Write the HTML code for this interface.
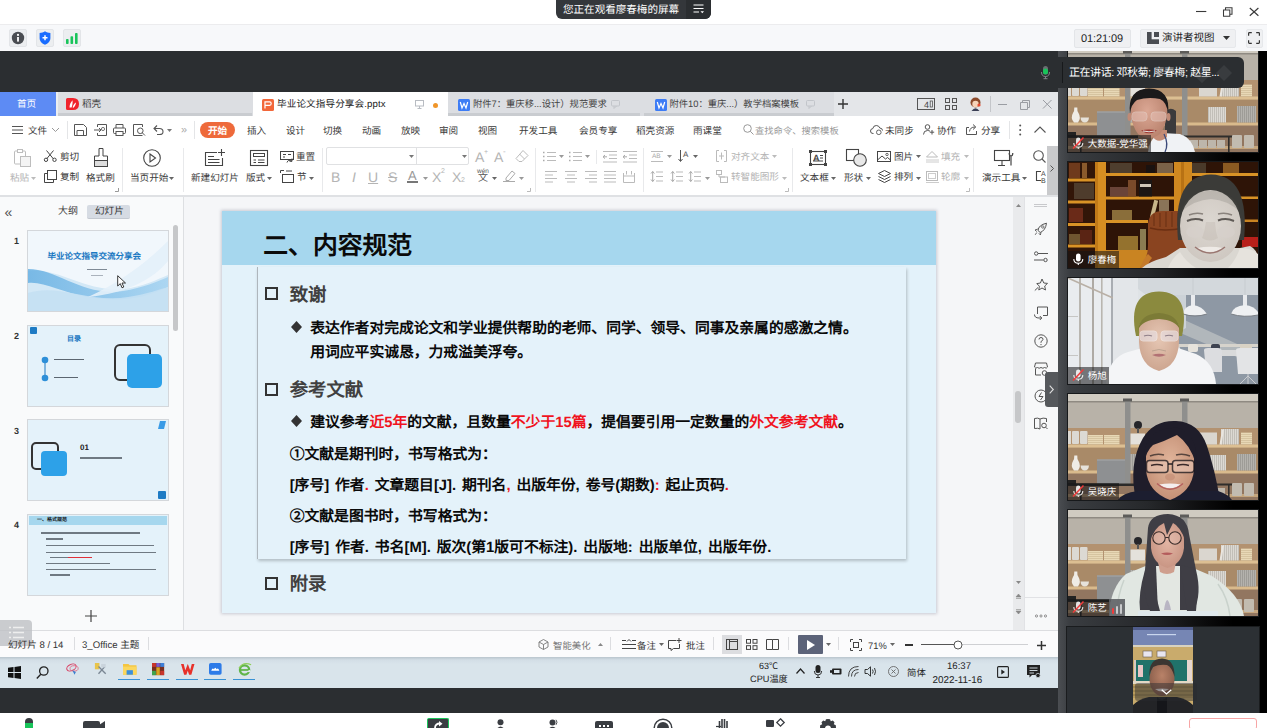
<!DOCTYPE html>
<html lang="zh-CN">
<head>
<meta charset="utf-8">
<title>meeting</title>
<style>
*{box-sizing:border-box;margin:0;padding:0}
html,body{width:1267px;height:728px;overflow:hidden;background:#fff;font-family:"Liberation Sans",sans-serif;}
.a{position:absolute}
#root{position:relative;width:1267px;height:728px;overflow:hidden;background:#fff}
.t{position:absolute;white-space:nowrap;line-height:1;display:block;text-rendering:geometricPrecision}
svg{position:absolute;overflow:visible}
.ib{position:absolute;top:29px;width:18px;height:18px;background:#eceef0;border:1px solid #e3e5e8;border-radius:2px}
.sep{position:absolute;width:1px;background:#e4e5e7}
.b{font-weight:bold}
.r{color:#f0141e}
</style>
</head>
<body>
<div id="root">
<div class="a" style="left:0px;top:0px;width:1267px;height:25px;background:#fff;"></div><div class="a" style="left:556px;top:0px;width:155px;height:19px;background:#34373b;border-radius:0 0 6px 6px"></div><div class="a" style="left:686px;top:0px;width:25px;height:19px;background:#2b2e31;border-radius:0 0 6px 0"></div><span class="t" style="left:563px;top:4.8px;font-size:10.55px;color:#fff;">您正在观看廖春梅的屏幕</span><svg style="left:693px;top:4px;" width="11" height="10" viewBox="0 0 11 10"><path d="M0.5 1H10.5M0.5 4.5H10.5M0.5 8H6" stroke="#fff" stroke-width="1.2" fill="none"/><path d="M7.5 7.2H11L9.25 9.3Z" fill="#fff"/></svg><svg style="left:1196px;top:5px;" width="66" height="14" viewBox="0 0 66 14"><path d="M0 6.500H10.300" stroke="#3a3a3a" stroke-width="1.1"/><path d="M27.500 5H33.800V11.200H27.500Z M29.500 5V2.800H36V9.200H33.800" stroke="#3a3a3a" stroke-width="1.05" fill="none"/><path d="M53.800 3L62.400 10.800M62.400 3L53.800 10.800" stroke="#3a3a3a" stroke-width="1.15"/></svg><div class="a" style="left:0px;top:24px;width:1267px;height:27px;background:#f7f8fa;border-top:1px solid #ececee"></div><div class="ib" style="left:9px"></div><div class="ib" style="left:36px"></div><div class="ib" style="left:63px"></div><svg style="left:11px;top:31px;" width="14" height="14" viewBox="0 0 14 14"><circle cx="7" cy="7" r="6.2" fill="#4a4d52"/><rect x="6.1" y="6" width="1.8" height="4.6" fill="#fff"/><circle cx="7" cy="3.9" r="1.1" fill="#fff"/></svg><svg style="left:39px;top:31px;" width="12" height="14" viewBox="0 0 12 14"><path d="M6 0.3C4.5 1.5 2.5 2 0.6 2V7C0.6 10.5 3 12.6 6 13.7C9 12.6 11.4 10.5 11.4 7V2C9.5 2 7.5 1.5 6 0.3Z" fill="#1a6dff"/><path d="M6 4.3V9.3M3.5 6.8H8.5" stroke="#fff" stroke-width="1.5"/></svg><svg style="left:66px;top:33px;" width="12" height="11" viewBox="0 0 12 11"><rect x="0" y="6" width="2.6" height="5" rx="0.8" fill="#19c45a"/><rect x="4.5" y="3.2" width="2.6" height="7.8" rx="0.8" fill="#19c45a"/><rect x="9" y="0" width="2.6" height="11" rx="0.8" fill="#19c45a"/></svg><div class="a" style="left:1074px;top:29px;width:57px;height:18.5px;background:#eff0f2;border-radius:2px;border:1px solid #e3e5e8"></div><span class="t" style="left:1081px;top:33.8px;font-size:11px;color:#222;letter-spacing:-0.1px">01:21:09</span><div class="a" style="left:1140px;top:29px;width:96px;height:18.5px;background:#eff0f2;border-radius:2px;border:1px solid #e6e8eb"></div><svg style="left:1147px;top:32px;" width="12" height="12" viewBox="0 0 12 12"><rect x="0" y="0" width="4.600" height="12" fill="#4a4d52"/><rect x="0" y="7.300" width="12" height="4.700" fill="#4a4d52"/><rect x="7" y="0" width="5" height="5" fill="#4a4d52"/></svg><span class="t" style="left:1162px;top:33.3px;font-size:10.5px;color:#222;">演讲者视图</span><svg style="left:1223px;top:36.2px;" width="7" height="4" viewBox="0 0 7 4"><path d="M0 0H7L3.500 4Z" fill="#333"/></svg><div class="a" style="left:1245.5px;top:29px;width:17px;height:18.5px;background:#eff0f2;border-radius:2px;border:1px solid #e6e8eb"></div><svg style="left:1248px;top:32px;" width="12" height="12" viewBox="0 0 12 12"><path d="M0.600 3.800V1.400Q0.600 0.600 1.400 0.600H3.800M8.200 0.600H10.600Q11.400 0.600 11.400 1.400V3.800M11.400 8.200V10.600Q11.400 11.400 10.600 11.400H8.200M3.800 11.400H1.400Q0.600 11.400 0.600 10.600V8.200" stroke="#333" stroke-width="1.2" fill="none"/></svg><div class="a" style="left:0px;top:51px;width:1060px;height:662px;background:#2b2e31;"></div><div class="a" style="left:1058px;top:51px;width:209px;height:662px;background:#000;"></div><div class="a" style="left:1058px;top:51px;width:10px;height:662px;background:linear-gradient(90deg,#3c4044,#2a2d30);"></div><div class="a" style="left:0px;top:92px;width:1058px;height:596px;background:#f1f2f4;"></div><div class="a" style="left:0px;top:92px;width:1058px;height:24px;background:#dcdee2;"></div><div class="a" style="left:834px;top:92px;width:224px;height:24px;background:#e4e6e9;"></div><div class="a" style="left:0px;top:92px;width:56px;height:24px;background:#5d8bf4;"></div><span class="t" style="left:17px;top:100px;font-size:9.6px;color:#fff;">首页</span><div class="a" style="left:56px;top:92px;width:2px;height:24px;background:#eceef0;"></div><svg style="left:66px;top:98px;" width="13" height="12" viewBox="0 0 13 12"><path d="M1.500 0H7Q13 0 13 6Q13 12 7 12H1.500Q0 12 0 10.500V1.500Q0 0 1.500 0Z" fill="#f0232c"/><path d="M3.5 9.5C3.5 6 5 4 6.5 2.2C6.8 4.5 6.5 7 5.6 9.5Z M6.6 9.6C7.2 7.2 8.3 5.6 10 4.6C9.8 6.8 8.8 8.6 7.4 9.7Z" fill="#fff"/></svg><span class="t" style="left:82px;top:100px;font-size:9.6px;color:#444;">稻壳</span><div class="a" style="left:58px;top:113px;width:194px;height:3px;background:#c9ccd0;"></div><div class="a" style="left:253px;top:92px;width:195px;height:24px;background:#fff;"></div><svg style="left:262px;top:98.5px;" width="12" height="12" viewBox="0 0 12 12"><rect width="12" height="12" rx="1.5" fill="#f2673a"/><path d="M3 9.5V2.8H7.6Q9.2 2.8 9.2 4.6Q9.2 6.4 7.6 6.4H3" stroke="#fff" stroke-width="1.2" fill="none"/></svg><span class="t" style="left:277px;top:100px;font-size:9.6px;color:#222;letter-spacing:0.1px">毕业论文指导分享会.pptx</span><svg style="left:415px;top:100px;" width="9" height="9" viewBox="0 0 9 9"><rect x="0.5" y="0.5" width="8" height="5.5" fill="none" stroke="#b8bcc2" stroke-width="1"/><path d="M4.5 6V8.5M2.5 8.5H6.5" stroke="#b8bcc2" stroke-width="1"/></svg><svg style="left:433px;top:102.5px;" width="5" height="5" viewBox="0 0 5 5"><circle cx="2.5" cy="2.5" r="2.5" fill="#f0962a"/></svg><svg style="left:458px;top:98.5px;" width="12" height="12" viewBox="0 0 12 12"><rect width="12" height="12" rx="1.5" fill="#3d7cf5"/><path d="M2.3 3L4 9L6 4.5L8 9L9.7 3" stroke="#fff" stroke-width="1.2" fill="none"/></svg><span class="t" style="left:473px;top:100px;font-size:9.3px;color:#444;">附件7：重庆移...设计）规范要求</span><svg style="left:611px;top:100px;" width="9" height="9" viewBox="0 0 9 9"><rect x="0.5" y="0.5" width="8" height="5.5" rx="1" fill="none" stroke="#c2c5ca" stroke-width="1"/><path d="M3 6L3 8.5L5.5 6" stroke="#c2c5ca" stroke-width="1" fill="none"/></svg><div class="a" style="left:448px;top:113px;width:192px;height:3px;background:#c9ccd0;"></div><svg style="left:655px;top:98.5px;" width="12" height="12" viewBox="0 0 12 12"><rect width="12" height="12" rx="1.5" fill="#3d7cf5"/><path d="M2.3 3L4 9L6 4.5L8 9L9.7 3" stroke="#fff" stroke-width="1.2" fill="none"/></svg><span class="t" style="left:669.5px;top:100px;font-size:9.3px;color:#444;">附件10：重庆...）教学档案模板</span><svg style="left:806px;top:100px;" width="9" height="9" viewBox="0 0 9 9"><rect x="0.5" y="0.5" width="8" height="5.5" rx="1" fill="none" stroke="#c2c5ca" stroke-width="1"/><path d="M3 6L3 8.5L5.5 6" stroke="#c2c5ca" stroke-width="1" fill="none"/></svg><div class="a" style="left:644px;top:113px;width:190px;height:3px;background:#c9ccd0;"></div><svg style="left:838px;top:99px;" width="10" height="10" viewBox="0 0 10 10"><path d="M5 0V10M0 5H10" stroke="#333" stroke-width="1.4"/></svg><svg style="left:917px;top:98px;" width="18" height="12" viewBox="0 0 18 12"><rect x="0.5" y="0.5" width="17" height="11" fill="none" stroke="#555" stroke-width="1"/><rect x="13.2" y="3" width="2.2" height="6" fill="none" stroke="#555" stroke-width="0.8"/></svg><span class="t" style="left:924px;top:100.5px;font-size:9px;color:#444;">4</span><svg style="left:945px;top:98px;" width="12" height="12" viewBox="0 0 12 12"><rect x="0.5" y="0.5" width="4" height="4" fill="none" stroke="#555"/><rect x="7.5" y="0.5" width="4" height="4" fill="none" stroke="#555"/><rect x="0.5" y="7.5" width="4" height="4" fill="none" stroke="#555"/><rect x="7.5" y="7.5" width="4" height="4" fill="none" stroke="#555"/></svg><svg style="left:969px;top:97px;" width="13" height="14" viewBox="0 0 13 14"><circle cx="6.5" cy="5.5" r="5" fill="#8b4a2b"/><circle cx="6.5" cy="7" r="3.2" fill="#f6d3b8"/><path d="M2.5 14Q6.5 8.5 10.5 14Z" fill="#3a3f55"/><circle cx="10" cy="8" r="1.6" fill="#e8482e"/></svg><div class="a" style="left:990px;top:96px;width:1px;height:16px;background:#c4c6ca;"></div><svg style="left:998px;top:98px;" width="56" height="12" viewBox="0 0 56 12"><path d="M0 6.5H9" stroke="#9a9da3" stroke-width="1"/><path d="M22.5 4.5H29.5V11.5H22.5Z M24.5 4.5V2.5H31.5V9.5H29.5" stroke="#9a9da3" stroke-width="1" fill="none"/><path d="M45 2L53.5 10.5M53.5 2L45 10.5" stroke="#9a9da3" stroke-width="1"/></svg><div class="a" style="left:0px;top:116px;width:1058px;height:27px;background:#fff;"></div><svg style="left:12px;top:126px;" width="11" height="8" viewBox="0 0 11 8"><path d="M0 0.5H11M0 4H11M0 7.5H11" stroke="#555" stroke-width="1"/></svg><span class="t" style="left:28px;top:126.8px;font-size:9.6px;color:#3b3b3b;">文件</span><svg style="left:52px;top:128px;" width="7" height="4" viewBox="0 0 7 4"><path d="M0 0L3.5 3.5L7 0" stroke="#999" fill="none"/></svg><div class="a" style="left:67px;top:121px;width:1px;height:18px;background:#e4e5e7;"></div><svg style="left:74px;top:124px;" width="13" height="12" viewBox="0 0 13 12"><path d="M0.5 0.5H9.5L12.5 3.5V11.5H0.5Z" fill="none" stroke="#555"/><path d="M3 11.5V6.5H9.5V11.5" fill="none" stroke="#555"/></svg><svg style="left:94px;top:124px;" width="13" height="12" viewBox="0 0 13 12"><path d="M3.5 3V0.5H12.5V11.5H3.5V9" fill="none" stroke="#555"/><path d="M0 6H7M5 4L7 6L5 8" fill="none" stroke="#555"/><circle cx="9" cy="5" r="1.6" fill="none" stroke="#555" stroke-width="0.8"/></svg><svg style="left:113px;top:124px;" width="13" height="12" viewBox="0 0 13 12"><path d="M3 4V0.5H10V4" fill="none" stroke="#555"/><rect x="0.5" y="4" width="12" height="5.5" rx="1" fill="none" stroke="#555"/><rect x="3" y="7.5" width="7" height="4" fill="#fff" stroke="#555"/></svg><svg style="left:133px;top:124px;" width="13" height="12" viewBox="0 0 13 12"><path d="M9.5 11.5H0.5V0.5H9.5V3" fill="none" stroke="#555"/><circle cx="7.3" cy="6.8" r="2.8" fill="none" stroke="#555"/><path d="M9.3 8.8L12 11.5" stroke="#555"/></svg><svg style="left:153px;top:124px;" width="11" height="11" viewBox="0 0 11 11"><path d="M1 4.5H6.5Q10 4.5 10 7.7Q10 10.5 6.5 10.5H4" fill="none" stroke="#555" stroke-width="1.1"/><path d="M4 1.5L1 4.5L4 7.5" fill="none" stroke="#555" stroke-width="1.1"/></svg><svg style="left:167px;top:129px;" width="5" height="3" viewBox="0 0 5 3"><path d="M0 0H5L2.5 3Z" fill="#777"/></svg><span class="t" style="left:181px;top:125px;font-size:11px;color:#aaa;">»</span><div class="a" style="left:194px;top:121px;width:1px;height:18px;background:#e4e5e7;"></div><div class="a" style="left:200px;top:122px;width:35px;height:16px;background:#ee6a3b;border-radius:8px"></div><span class="t" style="left:208px;top:126.6px;font-size:9.6px;color:#fff;font-weight:bold;">开始</span><span class="t" style="left:247px;top:126.8px;font-size:9.6px;color:#3b3b3b;">插入</span><span class="t" style="left:286px;top:126.8px;font-size:9.6px;color:#3b3b3b;">设计</span><span class="t" style="left:323px;top:126.8px;font-size:9.6px;color:#3b3b3b;">切换</span><span class="t" style="left:362px;top:126.8px;font-size:9.6px;color:#3b3b3b;">动画</span><span class="t" style="left:401px;top:126.8px;font-size:9.6px;color:#3b3b3b;">放映</span><span class="t" style="left:439px;top:126.8px;font-size:9.6px;color:#3b3b3b;">审阅</span><span class="t" style="left:478px;top:126.8px;font-size:9.6px;color:#3b3b3b;">视图</span><span class="t" style="left:519px;top:126.8px;font-size:9.6px;color:#3b3b3b;">开发工具</span><span class="t" style="left:579px;top:126.8px;font-size:9.6px;color:#3b3b3b;">会员专享</span><span class="t" style="left:636px;top:126.8px;font-size:9.6px;color:#3b3b3b;">稻壳资源</span><span class="t" style="left:693px;top:126.8px;font-size:9.6px;color:#3b3b3b;">雨课堂</span><svg style="left:743px;top:124px;" width="11" height="11" viewBox="0 0 11 11"><circle cx="4.5" cy="4.5" r="3.8" fill="none" stroke="#999"/><path d="M7.3 7.3L10.5 10.5" stroke="#999"/></svg><span class="t" style="left:755px;top:126.8px;font-size:9.299999999999999px;color:#999;">查找命令、搜索模板</span><svg style="left:870px;top:124px;" width="13" height="11" viewBox="0 0 13 11"><path d="M3.5 9.5H3Q0.5 9.5 0.5 7Q0.5 4.8 2.8 4.6Q3.3 1.5 6.3 1.5Q9 1.5 9.8 4Q12.5 4.2 12.5 6.5" fill="none" stroke="#555"/><circle cx="8.8" cy="8.3" r="2.3" fill="none" stroke="#555" stroke-width="0.9"/></svg><span class="t" style="left:885px;top:126.8px;font-size:9.6px;color:#3b3b3b;">未同步</span><svg style="left:923px;top:124px;" width="11" height="11" viewBox="0 0 11 11"><circle cx="4.5" cy="3" r="2.3" fill="none" stroke="#555"/><path d="M0.5 10.5Q0.5 6.5 4.5 6.5Q6 6.5 7 7.2" fill="none" stroke="#555"/><path d="M9 6V10.5M6.8 8.2H11.2" stroke="#555"/></svg><span class="t" style="left:937px;top:126.8px;font-size:9.6px;color:#3b3b3b;">协作</span><svg style="left:966px;top:124px;" width="12" height="11" viewBox="0 0 12 11"><path d="M3 3.5H0.5V10.5H10.5V7" fill="none" stroke="#555"/><path d="M3.5 7.5Q4 3 9 3M7 0.5L9.8 3L7 5.5" fill="none" stroke="#555"/></svg><span class="t" style="left:981px;top:126.8px;font-size:9.6px;color:#3b3b3b;">分享</span><div class="a" style="left:1009px;top:121px;width:1px;height:18px;background:#e4e5e7;"></div><svg style="left:1019px;top:124px;" width="3" height="12" viewBox="0 0 3 12"><circle cx="1.2" cy="1.5" r="1" fill="#555"/><circle cx="1.2" cy="6" r="1" fill="#555"/><circle cx="1.2" cy="10.5" r="1" fill="#555"/></svg><svg style="left:1034px;top:126px;" width="12" height="7" viewBox="0 0 12 7"><path d="M0.5 6.5L6 1L11.5 6.5" fill="none" stroke="#555" stroke-width="1.1"/></svg><div class="a" style="left:0px;top:143px;width:1058px;height:52px;background:#fff;"></div><div class="a" style="left:0px;top:194.5px;width:1058px;height:2px;background:#dfe1e4;"></div><svg style="left:14px;top:149px;" width="17" height="18" viewBox="0 0 17 18"><rect x="0.5" y="2" width="11" height="13" rx="1" fill="none" stroke="#bdbdbd"/><rect x="3.5" y="0.5" width="5" height="3" fill="#fff" stroke="#bdbdbd"/><rect x="6.5" y="7.5" width="10" height="10" fill="#f4f4f4" stroke="#bdbdbd"/></svg><span class="t" style="left:10px;top:174px;font-size:9.6px;color:#b4b4b4;">粘贴</span><svg style="left:31px;top:177px;" width="5" height="3" viewBox="0 0 5 3"><path d="M0 0H5L2.5 3Z" fill="#bbb"/></svg><svg style="left:44px;top:150px;" width="14" height="12" viewBox="0 0 14 12"><path d="M2.5 0.5L9.5 9M9.5 0.5L2.5 9" stroke="#444" stroke-width="1" fill="none"/><circle cx="2" cy="9.8" r="1.7" fill="none" stroke="#444"/><circle cx="10.5" cy="9.8" r="1.7" fill="none" stroke="#444"/></svg><span class="t" style="left:60px;top:153px;font-size:9.6px;color:#3b3b3b;">剪切</span><svg style="left:44px;top:170px;" width="13" height="13" viewBox="0 0 13 13"><rect x="3.5" y="0.5" width="9" height="9" fill="none" stroke="#444"/><path d="M3.5 3.5H0.5V12.5H9.5V9.5" fill="none" stroke="#444"/></svg><span class="t" style="left:60px;top:173px;font-size:9.6px;color:#3b3b3b;">复制</span><svg style="left:93px;top:148px;" width="16" height="19" viewBox="0 0 16 19"><path d="M6 0.5H10V8H14.5V18.5H1.5V8H6Z" fill="none" stroke="#444"/><rect x="1.5" y="12.5" width="13" height="6" fill="#ddd" stroke="#444"/></svg><span class="t" style="left:86px;top:174px;font-size:9.6px;color:#3b3b3b;">格式刷</span><svg style="left:115px;top:188px;" width="4" height="4" viewBox="0 0 4 4"><path d="M3.5 0V3.5H0" stroke="#999" fill="none"/></svg><div class="a" style="left:122px;top:148px;width:1px;height:44px;background:#e8e9eb;"></div><svg style="left:143px;top:149px;" width="18" height="18" viewBox="0 0 18 18"><circle cx="9" cy="9" r="8.3" fill="none" stroke="#444" stroke-width="1.1"/><path d="M7 5L12.5 9L7 13Z" fill="none" stroke="#444" stroke-width="1.1"/></svg><span class="t" style="left:130px;top:174px;font-size:9.6px;color:#3b3b3b;">当页开始</span><svg style="left:169px;top:177px;" width="5" height="3" viewBox="0 0 5 3"><path d="M0 0H5L2.5 3Z" fill="#666"/></svg><div class="a" style="left:183px;top:148px;width:1px;height:44px;background:#e8e9eb;"></div><svg style="left:205px;top:149px;" width="20" height="18" viewBox="0 0 20 18"><path d="M12 3.5H0.5V16.5H17.5V9" fill="none" stroke="#444" stroke-width="1.1"/><path d="M3 7.5H9M3 10.5H14.5M3 13.5H14.5" stroke="#444"/><path d="M16.5 0V7M13 3.5H20" stroke="#444" stroke-width="1.1"/></svg><span class="t" style="left:191px;top:174px;font-size:9.6px;color:#3b3b3b;">新建幻灯片</span><svg style="left:250px;top:150px;" width="18" height="16" viewBox="0 0 18 16"><rect x="0.5" y="0.5" width="17" height="15" fill="none" stroke="#444" stroke-width="1.1"/><rect x="3.5" y="3.5" width="11" height="3" fill="none" stroke="#444"/><path d="M3.5 10H6M8 10H14.5M3.5 12.5H6M8 12.5H14.5" stroke="#444"/></svg><span class="t" style="left:246px;top:174px;font-size:9.6px;color:#3b3b3b;">版式</span><svg style="left:267px;top:177px;" width="5" height="3" viewBox="0 0 5 3"><path d="M0 0H5L2.5 3Z" fill="#666"/></svg><svg style="left:280px;top:151px;" width="14" height="12" viewBox="0 0 14 12"><rect x="0.5" y="0.5" width="13" height="8" fill="none" stroke="#444"/><path d="M3 3.5H6M8 3.5H11M3 6H5" stroke="#444"/><path d="M7 11.5Q8 8 12 10M12 7.5V10.3H9.5" fill="none" stroke="#444"/></svg><span class="t" style="left:296px;top:153px;font-size:9.6px;color:#3b3b3b;">重置</span><svg style="left:280px;top:170px;" width="14" height="13" viewBox="0 0 14 13"><path d="M0.5 0.5H4M0.5 0.5V3" stroke="#444" fill="none"/><path d="M6 1H12" stroke="#444"/><rect x="2.5" y="4.5" width="11" height="8" fill="none" stroke="#444"/></svg><span class="t" style="left:297px;top:173px;font-size:9.6px;color:#3b3b3b;">节</span><svg style="left:309px;top:177px;" width="5" height="3" viewBox="0 0 5 3"><path d="M0 0H5L2.5 3Z" fill="#666"/></svg><div class="a" style="left:322px;top:148px;width:1px;height:44px;background:#e8e9eb;"></div><div class="a" style="left:326px;top:147px;width:143px;height:18px;background:#fff;border:1px solid #e0e1e3;border-radius:2px"></div><div class="a" style="left:416px;top:148px;width:1px;height:16px;background:#e0e1e3;"></div><svg style="left:409px;top:155px;" width="5" height="3" viewBox="0 0 5 3"><path d="M0 0H5L2.5 3Z" fill="#777"/></svg><svg style="left:462px;top:155px;" width="5" height="3" viewBox="0 0 5 3"><path d="M0 0H5L2.5 3Z" fill="#777"/></svg><span class="t" style="left:475px;top:150px;font-size:14px;color:#b4b4b4;">A</span><span class="t" style="left:484px;top:149px;font-size:7px;color:#b4b4b4;">+</span><span class="t" style="left:494px;top:150px;font-size:14px;color:#b4b4b4;">A</span><span class="t" style="left:503px;top:148px;font-size:8px;color:#b4b4b4;">-</span><svg style="left:515px;top:150px;" width="14" height="12" viewBox="0 0 14 12"><path d="M8 0.5L13 5.5L7 11.5H4L1 8.5Z M4.5 4L9.5 9" fill="none" stroke="#bbb"/></svg><span class="t" style="left:331px;top:170px;font-size:14px;color:#b4b4b4;">B</span><span class="t" style="left:352px;top:170px;font-size:14px;color:#b4b4b4;font-style:italic">I</span><span class="t" style="left:368px;top:170px;font-size:14px;color:#b4b4b4;text-decoration:underline">U</span><span class="t" style="left:388px;top:170px;font-size:14px;color:#b4b4b4;text-decoration:line-through">S</span><span class="t" style="left:408px;top:169px;font-size:13px;color:#999;">A</span><div class="a" style="left:407px;top:181px;width:11px;height:2px;background:#777;"></div><svg style="left:423px;top:177px;" width="5" height="3" viewBox="0 0 5 3"><path d="M0 0H5L2.5 3Z" fill="#999"/></svg><span class="t" style="left:432px;top:170px;font-size:14px;color:#b4b4b4;">X</span><span class="t" style="left:441px;top:168px;font-size:7px;color:#b4b4b4;">2</span><span class="t" style="left:452px;top:170px;font-size:14px;color:#b4b4b4;">X</span><span class="t" style="left:461px;top:177px;font-size:7px;color:#b4b4b4;">2</span><span class="t" style="left:477px;top:169px;font-size:6.5px;color:#555;">wén</span><span class="t" style="left:478px;top:174px;font-size:10px;color:#555;">文</span><svg style="left:492px;top:177px;" width="5" height="3" viewBox="0 0 5 3"><path d="M0 0H5L2.5 3Z" fill="#666"/></svg><svg style="left:503px;top:170px;" width="13" height="12" viewBox="0 0 13 12"><path d="M3 8L9 1L12 3.5L6 10.5H3Z" fill="none" stroke="#aaa"/><path d="M0 11.5H12" stroke="#aaa"/></svg><svg style="left:519px;top:177px;" width="5" height="3" viewBox="0 0 5 3"><path d="M0 0H5L2.5 3Z" fill="#999"/></svg><svg style="left:527px;top:188px;" width="4" height="4" viewBox="0 0 4 4"><path d="M3.5 0V3.5H0" stroke="#bbb" fill="none"/></svg><div class="a" style="left:535px;top:148px;width:1px;height:44px;background:#e8e9eb;"></div><svg style="left:543px;top:151px;" width="13" height="11" viewBox="0 0 13 11"><path d="M4 1.5H13M4 5.5H13M4 9.5H13" stroke="#bbb"/><path d="M0 1.5H1.5M0 5.5H1.5M0 9.5H1.5" stroke="#aaa" stroke-width="1.4"/></svg><svg style="left:559px;top:155px;" width="5" height="3" viewBox="0 0 5 3"><path d="M0 0H5L2.5 3Z" fill="#999"/></svg><svg style="left:569px;top:151px;" width="13" height="11" viewBox="0 0 13 11"><path d="M4 1.5H13M4 5.5H13M4 9.5H13" stroke="#bbb"/><path d="M0 1.5H1.5M0 5.5H1.5M0 9.5H1.5" stroke="#aaa" stroke-width="1.4"/></svg><svg style="left:585px;top:155px;" width="5" height="3" viewBox="0 0 5 3"><path d="M0 0H5L2.5 3Z" fill="#999"/></svg><div class="a" style="left:596px;top:150px;width:1px;height:14px;background:#e8e9eb;"></div><svg style="left:603px;top:151px;" width="14" height="11" viewBox="0 0 14 11"><path d="M0 0.5H14M6 4H14M6 7.5H14M0 11H14" stroke="#bbb"/><path d="M0 5.8H4M2 4L0 5.8L2 7.6" stroke="#aaa" fill="none"/></svg><svg style="left:623px;top:151px;" width="14" height="11" viewBox="0 0 14 11"><path d="M0 0.5H14M6 4H14M6 7.5H14M0 11H14" stroke="#bbb"/><path d="M0 5.8H4M2 4L0 5.8L2 7.6" stroke="#aaa" fill="none"/></svg><svg style="left:545px;top:171px;" width="12" height="11" viewBox="0 0 12 11"><path d="M0 0.5H12M0 4H8M0 7.5H12M0 11H8" stroke="#bbb"/></svg><svg style="left:565px;top:171px;" width="12" height="11" viewBox="0 0 12 11"><path d="M0 0.5H12M2 4H10M0 7.5H12M2 11H10" stroke="#bbb"/></svg><svg style="left:585px;top:171px;" width="12" height="11" viewBox="0 0 12 11"><path d="M0 0.5H12M4 4H12M0 7.5H12M4 11H12" stroke="#bbb"/></svg><svg style="left:604px;top:171px;" width="12" height="11" viewBox="0 0 12 11"><path d="M0 0.5H12M0 4H12M0 7.5H12M0 11H12" stroke="#bbb"/></svg><svg style="left:623px;top:171px;" width="12" height="12" viewBox="0 0 12 12"><path d="M0.5 2V11.5H11.5V2M0.5 5H11.5M3.5 0V3.5M8.5 0V3.5" stroke="#bbb" fill="none"/></svg><div class="a" style="left:643px;top:148px;width:1px;height:44px;background:#e8e9eb;"></div><svg style="left:651px;top:151px;" width="12" height="11" viewBox="0 0 12 11"><path d="M0 0.5H12M0 10.5H12" stroke="#bbb"/></svg><span class="t" style="left:652px;top:154px;font-size:6.5px;color:#aaa;">AB</span><svg style="left:667px;top:155px;" width="5" height="3" viewBox="0 0 5 3"><path d="M0 0H5L2.5 3Z" fill="#999"/></svg><svg style="left:678px;top:150px;" width="10" height="12" viewBox="0 0 10 12"><path d="M2.5 0V11M0.5 9L2.5 11.5L4.5 9" stroke="#555" fill="none"/></svg><span class="t" style="left:683px;top:151px;font-size:8px;color:#555;">A</span><svg style="left:693px;top:155px;" width="5" height="3" viewBox="0 0 5 3"><path d="M0 0H5L2.5 3Z" fill="#666"/></svg><svg style="left:716px;top:150px;" width="11" height="12" viewBox="0 0 11 12"><path d="M3 0.5H0.5V11.5H3M8 0.5H10.5V11.5H8M3 6H8M5.5 2.5V9.5" stroke="#bbb" fill="none"/></svg><span class="t" style="left:731px;top:153px;font-size:9.6px;color:#b4b4b4;">对齐文本</span><svg style="left:772px;top:155px;" width="5" height="3" viewBox="0 0 5 3"><path d="M0 0H5L2.5 3Z" fill="#bbb"/></svg><svg style="left:651px;top:171px;" width="12" height="11" viewBox="0 0 12 11"><path d="M5 1H12M5 5.5H12M5 10H12" stroke="#bbb"/><path d="M1.7 0.5V10.5M0 2.5L1.7 0.5L3.4 2.5M0 8.5L1.7 10.5L3.4 8.5" stroke="#aaa" fill="none"/></svg><svg style="left:671px;top:171px;" width="12" height="11" viewBox="0 0 12 11"><path d="M5 1H12M5 5.5H12M5 10H12" stroke="#bbb"/><path d="M1.7 0.5V10.5M0 2.5L1.7 0.5L3.4 2.5M0 8.5L1.7 10.5L3.4 8.5" stroke="#aaa" fill="none"/></svg><svg style="left:689px;top:171px;" width="12" height="11" viewBox="0 0 12 11"><path d="M5 1H12M5 5.5H12M5 10H12" stroke="#bbb"/><path d="M1.7 0.5V10.5M0 2.5L1.7 0.5L3.4 2.5M0 8.5L1.7 10.5L3.4 8.5" stroke="#aaa" fill="none"/></svg><svg style="left:705px;top:177px;" width="5" height="3" viewBox="0 0 5 3"><path d="M0 0H5L2.5 3Z" fill="#999"/></svg><svg style="left:716px;top:170px;" width="12" height="13" viewBox="0 0 12 13"><rect x="0.5" y="0.5" width="5" height="4" fill="none" stroke="#bbb"/><path d="M3 4.5V7H9" stroke="#bbb" fill="none"/><rect x="4.5" y="7" width="7" height="5.5" fill="none" stroke="#bbb"/></svg><span class="t" style="left:731px;top:173px;font-size:9.6px;color:#b4b4b4;">转智能图形</span><svg style="left:782px;top:177px;" width="5" height="3" viewBox="0 0 5 3"><path d="M0 0H5L2.5 3Z" fill="#bbb"/></svg><svg style="left:785px;top:188px;" width="4" height="4" viewBox="0 0 4 4"><path d="M3.5 0V3.5H0" stroke="#bbb" fill="none"/></svg><div class="a" style="left:792px;top:148px;width:1px;height:44px;background:#e8e9eb;"></div><svg style="left:809px;top:150px;" width="18" height="16" viewBox="0 0 18 16"><rect x="1.5" y="1.5" width="15" height="13" fill="none" stroke="#444" stroke-width="1.1"/><rect x="0" y="0" width="3" height="3" fill="#444"/><rect x="15" y="0" width="3" height="3" fill="#444"/><rect x="0" y="13" width="3" height="3" fill="#444"/><rect x="15" y="13" width="3" height="3" fill="#444"/><path d="M11 5.5H14M11 8H14M4 11H14" stroke="#444"/></svg><span class="t" style="left:813px;top:153.5px;font-size:9px;color:#444;font-weight:bold;">A</span><span class="t" style="left:800px;top:174px;font-size:9.6px;color:#3b3b3b;">文本框</span><svg style="left:831px;top:177px;" width="5" height="3" viewBox="0 0 5 3"><path d="M0 0H5L2.5 3Z" fill="#666"/></svg><svg style="left:846px;top:149px;" width="21" height="18" viewBox="0 0 21 18"><rect x="0.5" y="0.5" width="12" height="11" fill="none" stroke="#444" stroke-width="1.1"/><circle cx="14" cy="11" r="6.3" fill="#e8e8e8" stroke="#444" stroke-width="1.1"/></svg><span class="t" style="left:844px;top:174px;font-size:9.6px;color:#3b3b3b;">形状</span><svg style="left:866px;top:177px;" width="5" height="3" viewBox="0 0 5 3"><path d="M0 0H5L2.5 3Z" fill="#666"/></svg><svg style="left:877px;top:151px;" width="14" height="11" viewBox="0 0 14 11"><rect x="0.5" y="0.5" width="13" height="10" fill="none" stroke="#444"/><path d="M0.5 9L5 5L8.5 8L10.5 6.5L13.5 9" fill="none" stroke="#444"/><circle cx="10" cy="3.5" r="1.2" fill="none" stroke="#444" stroke-width="0.8"/></svg><span class="t" style="left:894px;top:153px;font-size:9.6px;color:#3b3b3b;">图片</span><svg style="left:916px;top:155px;" width="5" height="3" viewBox="0 0 5 3"><path d="M0 0H5L2.5 3Z" fill="#666"/></svg><svg style="left:878px;top:170px;" width="13" height="13" viewBox="0 0 13 13"><path d="M6.5 0.5L12.5 3.5L6.5 6.5L0.5 3.5Z M0.5 6.5L6.5 9.5L12.5 6.5M0.5 9.5L6.5 12.5L12.5 9.5" fill="none" stroke="#444"/></svg><span class="t" style="left:894px;top:173px;font-size:9.6px;color:#3b3b3b;">排列</span><svg style="left:916px;top:177px;" width="5" height="3" viewBox="0 0 5 3"><path d="M0 0H5L2.5 3Z" fill="#666"/></svg><svg style="left:926px;top:151px;" width="13" height="12" viewBox="0 0 13 12"><path d="M6 0.5L11.5 6H0.5Z" fill="none" stroke="#bbb"/><path d="M0 9H13M0 11H13" stroke="#ccc"/></svg><span class="t" style="left:941px;top:153px;font-size:9.6px;color:#b4b4b4;">填充</span><svg style="left:964px;top:155px;" width="5" height="3" viewBox="0 0 5 3"><path d="M0 0H5L2.5 3Z" fill="#bbb"/></svg><svg style="left:926px;top:171px;" width="13" height="12" viewBox="0 0 13 12"><rect x="0.5" y="0.5" width="11" height="9" fill="none" stroke="#bbb"/><rect x="2.5" y="2.5" width="7" height="5" fill="none" stroke="#ccc"/><path d="M0 11.5H13" stroke="#ccc"/></svg><span class="t" style="left:941px;top:173px;font-size:9.6px;color:#b4b4b4;">轮廓</span><svg style="left:964px;top:177px;" width="5" height="3" viewBox="0 0 5 3"><path d="M0 0H5L2.5 3Z" fill="#bbb"/></svg><svg style="left:966px;top:188px;" width="4" height="4" viewBox="0 0 4 4"><path d="M3.5 0V3.5H0" stroke="#bbb" fill="none"/></svg><div class="a" style="left:973px;top:148px;width:1px;height:44px;background:#e8e9eb;"></div><svg style="left:994px;top:150px;" width="20" height="17" viewBox="0 0 20 17"><rect x="0.5" y="0.5" width="15" height="10" fill="none" stroke="#444" stroke-width="1.1"/><path d="M8 10.5V15M4 15.5H11" stroke="#444" stroke-width="1.1"/><path d="M17 6V15.5M15.2 3Q15.2 6 17 6Q18.8 6 18.8 3" fill="none" stroke="#444" stroke-width="1.2"/></svg><span class="t" style="left:982px;top:174px;font-size:9.6px;color:#3b3b3b;">演示工具</span><svg style="left:1022px;top:177px;" width="5" height="3" viewBox="0 0 5 3"><path d="M0 0H5L2.5 3Z" fill="#666"/></svg><svg style="left:1033px;top:150px;" width="13" height="13" viewBox="0 0 13 13"><circle cx="5.5" cy="5.5" r="4.8" fill="none" stroke="#555" stroke-width="1.1"/><path d="M9 9L12.5 12.5" stroke="#555" stroke-width="1.1"/></svg><svg style="left:1036px;top:171px;" width="6" height="12" viewBox="0 0 6 12"><path d="M5 0.5H0.5V9.5H5" fill="none" stroke="#444" stroke-width="1.1"/></svg><span class="t" style="left:1041px;top:171px;font-size:7px;color:#444;">A</span><span class="t" style="left:1041px;top:178px;font-size:7px;color:#444;">B</span><div class="a" style="left:1047px;top:146px;width:11px;height:49px;background:#c9cacc;"></div><svg style="left:1050px;top:165px;" width="4" height="7" viewBox="0 0 4 7"><path d="M0.5 0.5L3.5 3.5L0.5 6.5" fill="none" stroke="#555"/></svg><div class="a" style="left:0px;top:196.5px;width:1058px;height:435px;background:#f5f6f8;"></div><div class="a" style="left:0px;top:196.5px;width:183px;height:435px;background:#f9fafb;"></div><div class="a" style="left:182.5px;top:196.5px;width:1px;height:435px;background:#dddfe2;"></div><span class="t" style="left:4.5px;top:204.5px;font-size:14px;color:#555;">«</span><span class="t" style="left:58px;top:207.3px;font-size:10px;color:#444;">大纲</span><div class="a" style="left:87px;top:204.5px;width:43px;height:14px;background:#d6dbe3;border-radius:2px;border-bottom:1px solid #c3c8d0"></div><span class="t" style="left:95px;top:207.2px;font-size:9.6px;color:#333;">幻灯片</span><div class="a" style="left:173px;top:225px;width:5px;height:106px;background:#c6c7c9;border-radius:3px"></div><span class="t" style="left:14px;top:237px;font-size:9px;color:#333;font-weight:bold;">1</span><span class="t" style="left:14px;top:332px;font-size:9px;color:#333;font-weight:bold;">2</span><span class="t" style="left:14px;top:427px;font-size:9px;color:#333;font-weight:bold;">3</span><span class="t" style="left:14px;top:521px;font-size:9px;color:#333;font-weight:bold;">4</span><div class="a" style="left:27px;top:229.5px;width:142px;height:82px;background:#eaf3fa;border:1px solid #d4d7db;overflow:hidden"></div><svg style="left:28px;top:230.5px;" width="140" height="80" viewBox="0 0 140 80"><defs><linearGradient id="g1" x1="0" y1="0" x2="1" y2="0"><stop offset="0" stop-color="#5aa9e0"/><stop offset="1" stop-color="#9fd0f0"/></linearGradient></defs><rect width="140" height="80" fill="#f1f7fc"/><path d="M0 40C30 36 60 62 95 58C115 56 130 48 140 44V80H0Z" fill="#d3e8f6"/><path d="M0 38C30 38 55 66 95 60C115 57 130 50 140 46V56C120 66 95 72 60 66C35 62 15 50 0 52Z" fill="url(#g1)" opacity="0.75"/><path d="M0 62C30 52 60 72 100 66C120 63 132 58 140 56V80H0Z" fill="#c4e0f3" opacity="0.9"/><path d="M60 66C95 50 120 30 140 10V30C125 48 100 62 60 66Z" fill="#e3f0f9" opacity="0.9"/></svg><span class="t" style="left:47.5px;top:252px;font-size:8.5px;color:#1a78c2;font-weight:bold;">毕业论文指导交流分享会</span><div class="a" style="left:87px;top:268.5px;width:20px;height:1.3px;background:#7f8a96;"></div><div class="a" style="left:91px;top:274.5px;width:12px;height:1px;background:#aab2bc;"></div><svg style="left:117px;top:275px;" width="9" height="14" viewBox="0 0 9 14"><path d="M0.7 0.7V11L3.3 8.6L5 12.8L6.8 12L5 8H8.5Z" fill="#fff" stroke="#222" stroke-width="0.9"/></svg><div class="a" style="left:27px;top:324.5px;width:142px;height:82px;background:#e4f2fa;border:1px solid #d4d7db"></div><div class="a" style="left:30px;top:327px;width:7px;height:7px;background:#1e7bc4;border-radius:1px"></div><span class="t" style="left:67px;top:336px;font-size:7px;color:#1a78c2;font-weight:bold;">目录</span><svg style="left:41px;top:355.5px;" width="8" height="26" viewBox="0 0 8 26"><path d="M4 6V20" stroke="#1e7bc4" stroke-width="1"/><circle cx="4" cy="4" r="3.3" fill="#2d8fd8"/><circle cx="4" cy="22" r="3.3" fill="#2d8fd8"/></svg><div class="a" style="left:54px;top:358.5px;width:30px;height:1.5px;background:#5b6670;"></div><div class="a" style="left:54px;top:376.5px;width:24px;height:1.5px;background:#5b6670;"></div><div class="a" style="left:114px;top:344px;width:37px;height:37px;background:transparent;border:2px solid #333;border-radius:6px"></div><div class="a" style="left:127px;top:354px;width:35px;height:34px;background:#2da1e8;border-radius:5px"></div><div class="a" style="left:27px;top:419px;width:142px;height:82px;background:#e4f2fa;border:1px solid #d4d7db"></div><svg style="left:158px;top:421px;" width="8" height="8" viewBox="0 0 8 8"><path d="M2 0H8L6 8H0Z" fill="#3a9be6"/></svg><div class="a" style="left:158px;top:491px;width:8px;height:8px;background:#1e7bc4;border-radius:1px"></div><div class="a" style="left:31px;top:442px;width:28px;height:28px;background:transparent;border:2px solid #333;border-radius:5px"></div><div class="a" style="left:41px;top:451px;width:26px;height:25px;background:#2da1e8;border-radius:4px"></div><span class="t" style="left:80px;top:443.5px;font-size:8px;color:#222;font-weight:bold;">01</span><div class="a" style="left:80px;top:457px;width:42px;height:1.5px;background:#6f7982;"></div><div class="a" style="left:27px;top:513.5px;width:142px;height:82px;background:#e4f2fa;border:1px solid #d4d7db"></div><div class="a" style="left:29px;top:516px;width:138px;height:9px;background:#a6d7ee;"></div><span class="t" style="left:37px;top:517.5px;font-size:5px;color:#111;font-weight:bold;">一、格式规范</span><div class="a" style="left:41px;top:532px;width:99px;height:1.5px;background:#6f7982;"></div><div class="a" style="left:46px;top:538px;width:17px;height:1.5px;background:#6f7982;"></div><div class="a" style="left:46px;top:544.5px;width:108px;height:1.5px;background:#6f7982;"></div><div class="a" style="left:46px;top:551.5px;width:110px;height:1.5px;background:#6f7982;"></div><div class="a" style="left:50px;top:556.5px;width:40px;height:1.5px;background:#6f7982;"></div><div class="a" style="left:46px;top:562.5px;width:64px;height:1.5px;background:#6f7982;"></div><div class="a" style="left:46px;top:568.5px;width:110px;height:1.5px;background:#6f7982;"></div><div class="a" style="left:50px;top:574px;width:20px;height:1.5px;background:#6f7982;"></div><div class="a" style="left:68px;top:556.5px;width:24px;height:1.5px;background:#e0303a;"></div><svg style="left:85px;top:610px;" width="12" height="12" viewBox="0 0 12 12"><path d="M6 0V12M0 6H12" stroke="#444" stroke-width="1.2"/></svg><div class="a" style="left:222px;top:211.3px;width:714px;height:401.7px;background:#e3f2fa;box-shadow:0 0 3px 1px rgba(90,90,120,0.28)"></div><div class="a" style="left:222px;top:211.3px;width:714px;height:53.7px;background:#a6d7ee;"></div><span class="t" style="left:263.3px;top:234.6px;font-size:24.8px;color:#0a0a0a;font-weight:bold;">二、内容规范</span><div class="a" style="left:257px;top:267px;width:649px;height:292px;background:#e4f2fa;border-left:1px solid #aeb6bc;box-shadow:1px 2px 3px rgba(0,0,0,0.22)"></div><div class="a" style="left:264.5px;top:287px;width:13px;height:13px;background:transparent;border:2.4px solid #333"></div><span class="t" style="left:289.7px;top:285.5px;font-size:18.4px;color:#404040;font-weight:bold;">致谢</span><svg style="left:291.2px;top:320.5px;" width="11.5" height="12.5" viewBox="0 0 11.5 12.5"><path d="M5.5 0L11 6L5.5 12L0 6Z" fill="#333"/></svg><span class="t" style="left:310.2px;top:321.6px;font-size:14.8px;color:#0a0a0a;font-weight:bold;">表达作者对完成论文和学业提供帮助的老师、同学、领导、同事及亲属的感激之情。</span><span class="t" style="left:310.2px;top:346.2px;font-size:14.8px;color:#0a0a0a;font-weight:bold;">用词应平实诚恳，力戒溢美浮夸。</span><div class="a" style="left:264.5px;top:382.5px;width:13px;height:13px;background:transparent;border:2.4px solid #333"></div><span class="t" style="left:289.7px;top:381px;font-size:18.4px;color:#404040;font-weight:bold;">参考文献</span><svg style="left:291.2px;top:415px;" width="11.5" height="12.5" viewBox="0 0 11.5 12.5"><path d="M5.5 0L11 6L5.5 12L0 6Z" fill="#333"/></svg><span class="t" style="left:310.2px;top:416.2px;font-size:14.8px;color:#0a0a0a;font-weight:bold;">建议参考<span class="r">近5年</span>的文献，且数量<span class="r">不少于15篇</span>，提倡要引用一定数量的<span class="r">外文参考文献</span>。</span><span class="t" style="left:289.7px;top:447.7px;font-size:14.8px;color:#0a0a0a;font-weight:bold;">①文献是期刊时，书写格式为：</span><span class="t" style="left:289.7px;top:479.3px;font-size:14.8px;color:#0a0a0a;font-weight:bold;word-spacing:1.8px">[序号] 作者<span class="r">.</span> 文章题目[J]. 期刊名<span class="r">,</span> 出版年份, 卷号(期数)<span class="r">:</span> 起止页码<span class="r">.</span></span><span class="t" style="left:289.7px;top:510.3px;font-size:14.8px;color:#0a0a0a;font-weight:bold;">②文献是图书时，书写格式为：</span><span class="t" style="left:289.7px;top:541.4px;font-size:14.8px;color:#0a0a0a;font-weight:bold;word-spacing:1.9px">[序号] 作者. 书名[M]. 版次(第1版可不标注). 出版地: 出版单位, 出版年份.</span><div class="a" style="left:264.5px;top:576.5px;width:13px;height:13px;background:transparent;border:2.4px solid #333"></div><span class="t" style="left:289.7px;top:575px;font-size:18.4px;color:#404040;font-weight:bold;">附录</span><div class="a" style="left:1013px;top:196.5px;width:11px;height:435px;background:#e9eaec;"></div><div class="a" style="left:1015px;top:391px;width:6px;height:32px;background:#c6c7c9;border-radius:3px"></div><svg style="left:1016px;top:204px;" width="5" height="3" viewBox="0 0 5 3"><path d="M0 3H5L2.5 0Z" fill="#888"/></svg><svg style="left:1016px;top:581px;" width="5" height="3" viewBox="0 0 5 3"><path d="M0 0H5L2.5 3Z" fill="#888"/></svg><svg style="left:1016px;top:594px;" width="5" height="6" viewBox="0 0 5 6"><path d="M0 3H5L2.5 0Z M0 4.5H5" fill="#888" stroke="#888" stroke-width="0.6"/></svg><svg style="left:1016px;top:608px;" width="5" height="6" viewBox="0 0 5 6"><path d="M0 3H5L2.5 6Z M0 1.5H5" fill="#888" stroke="#888" stroke-width="0.6"/></svg><div class="a" style="left:1024px;top:196.5px;width:34px;height:435px;background:#f7f8f9;border-left:1px solid #e1e2e5"></div><div class="a" style="left:1034px;top:204px;width:13px;height:1px;background:#c8c9cc;"></div><div class="a" style="left:1034px;top:206px;width:13px;height:1px;background:#c8c9cc;"></div><svg style="left:1034px;top:222px;" width="14" height="14" viewBox="0 0 14 14"><path d="M4 8.5Q4.5 3 12.5 1.2Q11.5 8.5 6.2 10.5Z" fill="none" stroke="#555"/><circle cx="8.8" cy="5" r="1.2" fill="none" stroke="#555" stroke-width="0.8"/><path d="M3.8 7L1 8L2.8 9.5M7 10.3L6.4 13L4.8 11.2M2.8 10.5L1.2 12.8" fill="none" stroke="#555" stroke-width="0.9"/></svg><svg style="left:1034px;top:251px;" width="14" height="12" viewBox="0 0 14 12"><path d="M4 2.5H14M0 9H9.5" stroke="#555"/><circle cx="2.2" cy="2.5" r="1.7" fill="none" stroke="#555"/><circle cx="11.5" cy="9" r="1.7" fill="none" stroke="#555"/></svg><svg style="left:1034px;top:278px;" width="14" height="14" viewBox="0 0 14 14"><path d="M8 1L9.8 5L13.5 5.4L10.7 8L11.5 12L8 10L4.8 12L5.4 8.2L2.8 5.6L6.4 5Z" fill="none" stroke="#555"/><path d="M0.8 12.5L4 9.5" stroke="#555"/></svg><svg style="left:1034px;top:306px;" width="14" height="14" viewBox="0 0 14 14"><path d="M3.5 8V1H13.5V9.5H9" fill="none" stroke="#555"/><path d="M0.5 8.5Q0.5 12 5 12H7.5M5.8 10L7.8 12L5.8 14" fill="none" stroke="#555"/></svg><svg style="left:1034px;top:334px;" width="14" height="14" viewBox="0 0 14 14"><circle cx="7" cy="7" r="6.2" fill="none" stroke="#555"/><path d="M5 5.5Q5 3.5 7 3.5Q9 3.5 9 5.3Q9 6.5 7 7.5V8.8" fill="none" stroke="#555"/><circle cx="7" cy="10.6" r="0.7" fill="#555"/></svg><svg style="left:1034px;top:362px;" width="14" height="14" viewBox="0 0 14 14"><path d="M1.5 1H12.5L13.5 5Q12.5 7 10.5 5.5Q9 7 7 5.5Q5 7 3.5 5.5Q1.5 7 0.5 5Z" fill="none" stroke="#555"/><path d="M1.5 6.5V13H7" fill="none" stroke="#555"/><circle cx="10.5" cy="11" r="2.3" fill="none" stroke="#555"/></svg><svg style="left:1034px;top:389px;" width="14" height="14" viewBox="0 0 14 14"><circle cx="7" cy="7" r="6" fill="none" stroke="#555"/><path d="M7.5 3.5L5 7.5H9L6.5 11" fill="none" stroke="#555"/></svg><svg style="left:1034px;top:417px;" width="14" height="13" viewBox="0 0 14 13"><path d="M0.5 1.5Q4 0.5 6 2V12Q4 10.8 0.5 11.5Z" fill="none" stroke="#555"/><path d="M6 2Q9 0.5 12.5 1.5V5" fill="none" stroke="#555"/><circle cx="10" cy="8.5" r="2.3" fill="none" stroke="#555"/><path d="M11.8 10.3L13.5 12" stroke="#555"/></svg><div class="a" style="left:1024px;top:597px;width:34px;height:1px;background:#e1e2e5;"></div><svg style="left:1035px;top:614px;" width="12" height="4" viewBox="0 0 12 4"><circle cx="1.5" cy="2" r="1.1" fill="none" stroke="#777" stroke-width="0.8"/><circle cx="6" cy="2" r="1.1" fill="none" stroke="#777" stroke-width="0.8"/><circle cx="10.5" cy="2" r="1.1" fill="none" stroke="#777" stroke-width="0.8"/></svg><div class="a" style="left:1045px;top:372px;width:13px;height:35px;background:#55585c;border-radius:3px 0 0 3px"></div><svg style="left:1049px;top:385px;" width="5" height="9" viewBox="0 0 5 9"><path d="M0.7 0.7L4.3 4.5L0.7 8.3" fill="none" stroke="#ddd" stroke-width="1.1"/></svg><div class="a" style="left:0px;top:629.5px;width:1058px;height:28px;background:#fbfbfc;border-top:1px solid #dcdde0"></div><div class="a" style="left:0px;top:620px;width:32px;height:26px;background:rgba(190,192,196,0.8);border-radius:0 4px 4px 0"></div><svg style="left:9px;top:626px;" width="15" height="13" viewBox="0 0 15 13"><path d="M4 1.5H15M4 6.5H15M4 11.5H15" stroke="#eee" stroke-width="1.3"/><path d="M0 1.5H2M0 6.5H2M0 11.5H2" stroke="#eee" stroke-width="1.3"/></svg><span class="t" style="left:8px;top:641px;font-size:9.6px;color:#333;">幻灯片 8 / 14</span><div class="a" style="left:74px;top:637px;width:1px;height:13px;background:#dcdde0;"></div><span class="t" style="left:82px;top:641px;font-size:9.6px;color:#333;">3_Office 主题</span><div class="a" style="left:148px;top:637px;width:1px;height:13px;background:#dcdde0;"></div><div class="a" style="left:1058px;top:51px;width:209px;height:662px;background:linear-gradient(90deg,#4b4e52 0px,#3a3d41 12px,#26282b 90px,#0a0a0b 150px,#000 175px);"></div><svg width="0" height="0" style="left:0;top:0"><defs>
<radialGradient id="sk1" cx="0.45" cy="0.45" r="0.65"><stop offset="0" stop-color="#dba794"/><stop offset="1" stop-color="#b67f6a"/></radialGradient>
<radialGradient id="sk3" cx="0.5" cy="0.4" r="0.7"><stop offset="0" stop-color="#e6c7b4"/><stop offset="1" stop-color="#c9a08a"/></radialGradient>
<radialGradient id="sk4" cx="0.5" cy="0.45" r="0.65"><stop offset="0" stop-color="#e2b69c"/><stop offset="1" stop-color="#bf8a70"/></radialGradient>
<radialGradient id="sk5" cx="0.5" cy="0.45" r="0.65"><stop offset="0" stop-color="#e3b5a4"/><stop offset="1" stop-color="#c4907e"/></radialGradient>
<radialGradient id="sk2" cx="0.5" cy="0.45" r="0.7"><stop offset="0" stop-color="#dcd7d1"/><stop offset="1" stop-color="#cbc4bd"/></radialGradient>
<radialGradient id="sk6" cx="0.5" cy="0.4" r="0.7"><stop offset="0" stop-color="#b98268"/><stop offset="1" stop-color="#7e5544"/></radialGradient>
<pattern id="bk" width="2" height="4" patternUnits="userSpaceOnUse"><rect width="2" height="4" fill="#dcd9d3"/><rect width="0.55" height="4" fill="#aeaaa2"/></pattern>
<pattern id="bk2" width="2" height="4" patternUnits="userSpaceOnUse"><rect width="2" height="4" fill="#b4b2ad"/><rect width="0.55" height="4" fill="#8d8b86"/></pattern>
<pattern id="st" width="4" height="2" patternUnits="userSpaceOnUse"><rect width="4" height="2" fill="#e8d8b6"/><rect width="4" height="0.5" fill="#c5b08a"/></pattern>
</defs></svg><div class="a" style="left:1068px;top:51px;width:190px;height:101px;overflow:hidden;outline:1px solid #17191b;background:#333"><svg style="left:0;top:-5px;filter:blur(0.65px)" width="190" height="106" viewBox="0 0 190 106"><rect x="-8" y="-8" width="206" height="122" fill="#a89a88"/>

<rect width="190" height="106" fill="#b8b2a8"/>
<rect width="190" height="8" fill="#d0cbc1"/>
<rect y="7" width="190" height="1.5" fill="#8f8a82"/>
<rect y="34" width="190" height="20" fill="#b39270"/>
<rect y="54" width="190" height="25" fill="#a98a68"/>
<rect y="79" width="190" height="27" fill="#927660"/>
<rect y="50.5" width="190" height="3" fill="#dcbf92"/>
<rect y="76.5" width="190" height="3" fill="#d9ba8c"/>
<rect y="100" width="190" height="3" fill="#c5a67e"/>
<rect x="57" y="5" width="5.5" height="86" fill="#8f8f8d"/>
<rect x="114" y="5" width="5.5" height="86" fill="#8f8f8d"/>
<rect x="55" y="4.5" width="9" height="3" fill="#5d5c5a"/><rect x="112" y="4.5" width="9" height="3" fill="#5d5c5a"/>
<rect x="0" y="37" width="3" height="13" fill="#dcd9d3"/><rect x="4" y="37" width="7" height="13" rx="1" fill="#dcd9d3"/><rect x="12" y="37" width="7.5" height="13" rx="1" fill="#dcd9d3"/>
<rect x="20" y="41" width="15" height="9.5" fill="url(#st)"/><rect x="36" y="41" width="15.5" height="9.5" fill="url(#st)"/>
<rect x="62.5" y="39.5" width="14.5" height="11" fill="#e4e1db"/><circle cx="70" cy="31" r="4" fill="#26262a"/><rect x="69" y="34" width="2" height="5" fill="#555"/>
<rect x="131" y="38.5" width="18" height="12" fill="#dad6cf"/><rect x="153" y="35" width="18" height="15.5" fill="url(#bk)"/><path d="M151.5 50.5L154 35.5H156L153.5 50.5Z" fill="#e9e6e0"/><rect x="173" y="38.5" width="11" height="12" fill="url(#st)"/>
<rect x="62" y="60" width="10" height="16.5" fill="url(#bk2)"/>
<rect x="140" y="61" width="18" height="15.5" fill="url(#bk)"/><rect x="169" y="60" width="19" height="16.5" fill="url(#bk2)"/>
<path d="M6 76.5Q2 72 5 67Q6.5 65 6.3 61.5H9.3Q9 65 10.5 67Q13.5 72 10 76.5Z" fill="#efece6"/>
<path d="M12.5 71.5H21Q20.5 76.5 16.8 76.5Q13 76.5 12.5 71.5Z" fill="#e6e2da"/>
<rect x="29" y="65.5" width="28" height="24.5" fill="#8e9092"/><rect x="29" y="65.5" width="28" height="1" fill="#a6a8aa"/>
<rect x="0" y="89.5" width="70" height="2.5" fill="#2b2a29"/><rect x="12" y="92" width="1.6" height="14" fill="#2b2a29"/>
<rect x="116" y="89.5" width="52" height="2" fill="#2f2d2b"/><rect x="160" y="91" width="1.6" height="15" fill="#2f2d2b"/>
<rect x="0" y="86" width="8" height="5" fill="#222"/>
<rect x="122" y="94" width="8" height="8" fill="#bdb6ab"/><rect x="131" y="94" width="8" height="8" fill="#bdb6ab"/><rect x="140" y="94" width="8" height="8" fill="#bdb6ab"/><rect x="149" y="94" width="8" height="8" fill="#bdb6ab"/>
<rect x="164" y="89" width="10" height="13" rx="1" fill="#c2bbb0"/><rect x="176" y="89" width="10" height="13" rx="1" fill="#c2bbb0"/>

<path d="M97 66Q102 60 108 65V94H97Z" fill="#3b3a3c"/>
<path d="M80 106Q82 90 94 87L112 88Q124 92 127 106Z" fill="#f0f2f5"/>
<path d="M84 90Q90 99 99 91L99 84L85 84Z" fill="#c48c76"/>
<path d="M62.500 66Q61 43 81 43Q101 43 99.500 66Q98 80 92 88Q81 96 70 88Q64 80 62.500 66Z" fill="url(#sk1)"/>
<path d="M62 68Q59 43 81 42.500Q103 43 100 68Q99 56 92 53Q80 50.500 69 54Q63 58 62 68Z" fill="#1b191a"/>
<ellipse cx="61.500" cy="71" rx="2" ry="4" fill="#c08a76"/><ellipse cx="100.500" cy="71" rx="2" ry="4" fill="#c08a76"/>
<rect x="64" y="66" width="15" height="9" rx="3.500" fill="#e6c2b8" opacity="0.55" stroke="#e9ddd8" stroke-width="0.9"/><rect x="83" y="66" width="15" height="9" rx="3.500" fill="#e6c2b8" opacity="0.55" stroke="#e9ddd8" stroke-width="0.9"/>
<path d="M73 84.500Q81 90 89 84.500Q81 82.500 73 84.500Z" fill="#9c3832"/><path d="M75 85Q81 86.500 87 85" stroke="#f0e6e2" stroke-width="1"/>
<path d="M96 88Q101 98 97 106" stroke="#3b4a7a" stroke-width="1.300" fill="none"/></svg><div class="a" style="left:0;top:84px;width:83px;height:17px;background:rgba(20,20,22,0.55)"></div><svg style="left:5px;top:86px" width="11" height="13" viewBox="0 0 11 13"><g opacity="0.85"><rect x="3" y="0.5" width="4.6" height="8" rx="2.3" fill="#fff"/><path d="M0.8 6Q0.8 10.2 5.3 10.2Q9.8 10.2 9.8 6M5.3 10.2V12" fill="none" stroke="#fff" stroke-width="1.1"/></g><path d="M0 11.5L10.5 0.5" stroke="#f23b3b" stroke-width="1.5"/></svg><span class="t" style="left:19.7px;top:89.4px;font-size:9.5px;color:#fff">大数据-党华强</span></div><div class="a" style="left:1068px;top:162px;width:190px;height:106px;overflow:hidden;outline:1px solid #17191b;background:#333"><svg style="left:0;top:0px;filter:blur(0.65px)" width="190" height="106" viewBox="0 0 190 106"><rect x="-8" y="-8" width="206" height="122" fill="#5a2e10"/><rect width="190" height="106" fill="#2e1407"/>
<rect x="0" y="0" width="27" height="106" fill="#321608"/>
<rect x="27" y="0" width="11" height="106" fill="#d68e22"/><rect x="27" y="0" width="3" height="106" fill="#c27a18"/>
<rect x="106" y="0" width="18" height="106" fill="#d08820"/><rect x="113" y="0" width="3" height="60" fill="#b87214"/>
<rect x="38" y="11" width="68" height="3" fill="#d99326"/><rect x="38" y="34.5" width="68" height="3" fill="#d99326"/><rect x="38" y="58" width="42" height="3" fill="#d99326"/><rect x="38" y="88" width="45" height="18" fill="#c98422"/>
<rect x="0" y="16.5" width="27" height="3" fill="#d99326"/><rect x="0" y="38.5" width="27" height="3" fill="#d99326"/><rect x="0" y="61" width="27" height="3" fill="#d99326"/><rect x="0" y="82.5" width="27" height="3" fill="#d99326"/>
<rect x="124" y="11" width="66" height="3" fill="#d99326"/><rect x="170" y="34.5" width="20" height="2.5" fill="#d99326"/><rect x="172" y="57.5" width="18" height="2.5" fill="#c98422"/>
<rect x="1" y="1" width="11" height="15" fill="#6e3a1c"/><rect x="14" y="1" width="5" height="15" fill="#8a5a2c"/>
<rect x="6" y="21" width="20" height="16" fill="#4e3c2c"/><rect x="1" y="46" width="14" height="14" fill="#6a2a18"/><rect x="1" y="72" width="11" height="10" fill="#6e5530"/><rect x="12" y="68" width="12" height="14" fill="#5a2414"/>
<rect x="42" y="1" width="22" height="10" fill="#4e3e2e"/><rect x="78" y="3" width="9" height="8" fill="#1a1210"/><rect x="89" y="1" width="16" height="10" fill="#7a6248"/>
<rect x="42" y="25" width="18" height="9.5" fill="#6a4438"/><rect x="60" y="18" width="8" height="16.5" fill="#7a4a2a"/><rect x="71" y="18" width="13" height="16.500" fill="#1c1614"/><rect x="72" y="22" width="11" height="3" fill="#cfc6b8"/>
<rect x="44" y="48" width="20" height="10" fill="#8a6e3a"/><rect x="84" y="38" width="4" height="18" fill="#c8b68a" transform="rotate(14 86 47)"/><rect x="91" y="38" width="10" height="13" fill="#8a7458"/>
<rect x="50" y="74" width="20" height="14" fill="#94722e"/><rect x="72" y="67" width="6" height="21" fill="#8a7c52"/>
<rect x="124" y="1" width="14" height="10" fill="#4a3a2a"/><rect x="155" y="1" width="16" height="10" fill="#8a5a22"/>
<rect x="174" y="75" width="16" height="10" fill="#b8201a"/>
<path d="M80 62Q81 49 95 49H112Q118 49 118 60V106H72Q80 96 80 84Z" fill="#8a4420"/>
<path d="M82 66Q96 70 116 66" stroke="#6a2e12" stroke-width="1.5" fill="none"/><path d="M86 52V64M92 51V65M98 50V65M104 50V65M110 51V64" stroke="#6e3216" stroke-width="1.2"/>
<path d="M72 106Q76 96 80 92L84 96Q80 100 80 106Z" fill="#c47a2a"/>
<path d="M74 106Q80 100 98 95L112 86H172L182 84Q190 88 190 98V106Z" fill="#dad7d1"/>
<path d="M110 78Q104 13 143 12.5Q182 13 176 78Z" fill="#3b3b38"/>
<ellipse cx="142.500" cy="64" rx="30.500" ry="36" fill="url(#sk2)"/>
<path d="M113 50Q118 30 143 28.500Q168 30 172 50Q160 38 143 37Q126 38 113 50Z" fill="#55534f" opacity="0.18"/>
<ellipse cx="127" cy="70" rx="9" ry="6" fill="#d6d0ca" opacity="0.8"/><ellipse cx="158" cy="70" rx="9" ry="6" fill="#d6d0ca" opacity="0.8"/>
<path d="M119 59Q127 55.500 135 58.500M150 58.500Q158 55.500 166 59" stroke="#4a4542" stroke-width="2" fill="none" opacity="0.85"/>
<path d="M121 53Q128 50 135 52M150 52Q157 50 164 53" stroke="#6a625c" stroke-width="1.6" fill="none" opacity="0.7"/>
<path d="M138 60Q136 72 134 76Q142 81 150 76Q148 72 147 60" fill="#bdb4ac" opacity="0.35"/>
<path d="M129 86Q142 94 155 86Q142 83.500 129 86Z" fill="#eeeae6"/><path d="M127 85Q142 97 157 85" stroke="#9a7670" stroke-width="1.5" fill="none"/>
<path d="M112 90Q118 100 128 106H100Q104 96 112 90Z" fill="#e6e3dd"/><path d="M172 86Q168 98 160 106H190V92Q184 86 172 86Z" fill="#e6e3dd"/></svg><div class="a" style="left:0;top:89px;width:51px;height:17px;background:rgba(20,20,22,0.55)"></div><svg style="left:5px;top:91px" width="11" height="13" viewBox="0 0 11 13"><rect x="3" y="0.5" width="4.6" height="8" rx="2.3" fill="#fff"/><path d="M0.8 6Q0.8 10.2 5.3 10.2Q9.8 10.2 9.8 6M5.3 10.2V12" fill="none" stroke="#fff" stroke-width="1.1"/></svg><span class="t" style="left:19.7px;top:94.4px;font-size:9.5px;color:#fff">廖春梅</span></div><div class="a" style="left:1068px;top:278px;width:190px;height:106px;overflow:hidden;outline:1px solid #17191b;background:#333"><svg style="left:0;top:0px;filter:blur(0.65px)" width="190" height="106" viewBox="0 0 190 106"><rect x="-8" y="-8" width="206" height="122" fill="#cfd4d8"/><rect width="190" height="106" fill="#dfe3e6"/>
<path d="M56 0H190V17H78Z" fill="#d3d8dc"/>
<path d="M78 17H190V106H120L112 70Z" fill="#8e98a4"/>
<path d="M112 40L178 70L176 82L110 54Z" fill="#b7bcc0" opacity="0.85"/>
<path d="M78 17H118V50L100 60Z" fill="#ccd2d7"/>
<rect x="0" y="0" width="45" height="106" fill="#e9ecef"/>
<rect x="11" y="0" width="2" height="106" fill="#b9b6b0"/><rect x="24" y="0" width="2" height="106" fill="#aeaaa4"/><rect x="33" y="0" width="1.600" height="106" fill="#b9b6b0"/><rect x="43" y="0" width="2" height="106" fill="#a9adb2"/>
<path d="M0 0L45 20" stroke="#b9b0a6" stroke-width="1.5"/><rect x="0" y="38" width="10" height="1" fill="#c6c6c4"/><rect x="0" y="77" width="10" height="1" fill="#c6c6c4"/>
<rect x="45" y="0" width="25" height="106" fill="#e3e6e9"/>
<rect x="124.500" y="0" width="1" height="17" fill="#c8ccd0"/><rect x="123" y="17" width="4" height="13" fill="#e9ebee"/><path d="M115 36Q116 28 125 27Q134 28 139 36Q127 39 115 36Z" fill="#eef0f2"/><path d="M115 36Q127 40 139 36" stroke="#7a7f86" stroke-width="1" fill="none"/>
<rect x="176.500" y="0" width="1" height="17" fill="#c8ccd0"/><rect x="175" y="17" width="4" height="13" fill="#e9ebee"/><path d="M163 36Q165 28 177 27Q186 28 190 34V37Q176 40 163 36Z" fill="#eef0f2"/><path d="M163 36Q176 40 190 37" stroke="#7a7f86" stroke-width="1" fill="none"/>
<rect x="110" y="66" width="80" height="3" fill="#d6d3cc"/><path d="M150 72H190V78H150Z" fill="#d9dadb"/>
<rect x="120" y="66" width="10" height="8" rx="2" fill="#e6e3dc"/><rect x="143" y="66" width="9" height="8" rx="2" fill="#3d4250"/><rect x="172" y="66" width="12" height="6" rx="2" fill="#d9d2c4"/>
<path d="M136 72Q136 70 140 70H150Q154 70 154 74V94H138Z" fill="#dcdde0"/>
<path d="M168 72Q168 70 172 70H190V96H170Z" fill="#e3e4e6"/><path d="M180 96V106M180 98L172 106M180 98L188 106" stroke="#c9cbcf" stroke-width="1"/>
<path d="M38 106Q40 80 60 74L82 68H104L128 76Q146 84 148 106Z" fill="#f4f5f7"/>
<path d="M78 78Q92 90 106 78L103 68H81Z" fill="#d2ae98"/>
<path d="M68 58Q59 14 91 13.500Q123 14 114 58Z" fill="#8b8a3e"/>
<path d="M71 50Q71 39 91 39Q111 39 111 50V64Q110 88 91 93Q72 88 71 64Z" fill="url(#sk3)"/>
<path d="M70 52Q72 36 91 35Q110 36 112 52Q108 42 91 41Q74 42 70 52Z" fill="#7c7b36"/>
<rect x="72" y="53" width="17" height="10" rx="3" fill="#e9e6f0" opacity="0.55" stroke="#f6f6fa" stroke-width="1"/><rect x="93" y="53" width="17" height="10" rx="3" fill="#e9e6f0" opacity="0.55" stroke="#f6f6fa" stroke-width="1"/>
<path d="M76 58Q80 56.500 84 58M97 58Q101 56.500 105 58" stroke="#6a5a6a" stroke-width="1.200" fill="none" opacity="0.7"/>
<path d="M84 77Q91 74.500 98 77Q91 80.500 84 77Z" fill="#b27274"/>
<path d="M84 73Q91 70 98 73" stroke="#9a8a7a" stroke-width="1" fill="none" opacity="0.5"/></svg><div class="a" style="left:0;top:89px;width:41px;height:17px;background:rgba(20,20,22,0.55)"></div><svg style="left:5px;top:91px" width="11" height="13" viewBox="0 0 11 13"><g opacity="0.85"><rect x="3" y="0.5" width="4.6" height="8" rx="2.3" fill="#fff"/><path d="M0.8 6Q0.8 10.2 5.3 10.2Q9.8 10.2 9.8 6M5.3 10.2V12" fill="none" stroke="#fff" stroke-width="1.1"/></g><path d="M0 11.5L10.5 0.5" stroke="#f23b3b" stroke-width="1.5"/></svg><span class="t" style="left:19.7px;top:94.4px;font-size:9.5px;color:#fff">杨旭</span></div><div class="a" style="left:1068px;top:394px;width:190px;height:106px;overflow:hidden;outline:1px solid #17191b;background:#333"><svg style="left:0;top:0px;filter:blur(0.65px)" width="190" height="106" viewBox="0 0 190 106"><rect x="-8" y="-8" width="206" height="122" fill="#a89a88"/>

<rect width="190" height="106" fill="#b8b2a8"/>
<rect width="190" height="8" fill="#d0cbc1"/>
<rect y="7" width="190" height="1.5" fill="#8f8a82"/>
<rect y="34" width="190" height="20" fill="#b39270"/>
<rect y="54" width="190" height="25" fill="#a98a68"/>
<rect y="79" width="190" height="27" fill="#927660"/>
<rect y="50.5" width="190" height="3" fill="#dcbf92"/>
<rect y="76.5" width="190" height="3" fill="#d9ba8c"/>
<rect y="100" width="190" height="3" fill="#c5a67e"/>
<rect x="57" y="5" width="5.5" height="86" fill="#8f8f8d"/>
<rect x="114" y="5" width="5.5" height="86" fill="#8f8f8d"/>
<rect x="55" y="4.5" width="9" height="3" fill="#5d5c5a"/><rect x="112" y="4.5" width="9" height="3" fill="#5d5c5a"/>
<rect x="0" y="37" width="3" height="13" fill="#dcd9d3"/><rect x="4" y="37" width="7" height="13" rx="1" fill="#dcd9d3"/><rect x="12" y="37" width="7.5" height="13" rx="1" fill="#dcd9d3"/>
<rect x="20" y="41" width="15" height="9.5" fill="url(#st)"/><rect x="36" y="41" width="15.5" height="9.5" fill="url(#st)"/>
<rect x="62.5" y="39.5" width="14.5" height="11" fill="#e4e1db"/><circle cx="70" cy="31" r="4" fill="#26262a"/><rect x="69" y="34" width="2" height="5" fill="#555"/>
<rect x="131" y="38.5" width="18" height="12" fill="#dad6cf"/><rect x="153" y="35" width="18" height="15.5" fill="url(#bk)"/><path d="M151.5 50.5L154 35.5H156L153.5 50.5Z" fill="#e9e6e0"/><rect x="173" y="38.5" width="11" height="12" fill="url(#st)"/>
<rect x="62" y="60" width="10" height="16.5" fill="url(#bk2)"/>
<rect x="140" y="61" width="18" height="15.5" fill="url(#bk)"/><rect x="169" y="60" width="19" height="16.5" fill="url(#bk2)"/>
<path d="M6 76.5Q2 72 5 67Q6.5 65 6.3 61.5H9.3Q9 65 10.5 67Q13.5 72 10 76.5Z" fill="#efece6"/>
<path d="M12.5 71.5H21Q20.5 76.5 16.8 76.5Q13 76.5 12.5 71.5Z" fill="#e6e2da"/>
<rect x="29" y="65.5" width="28" height="24.5" fill="#8e9092"/><rect x="29" y="65.5" width="28" height="1" fill="#a6a8aa"/>
<rect x="0" y="89.5" width="70" height="2.5" fill="#2b2a29"/><rect x="12" y="92" width="1.6" height="14" fill="#2b2a29"/>
<rect x="116" y="89.5" width="52" height="2" fill="#2f2d2b"/><rect x="160" y="91" width="1.6" height="15" fill="#2f2d2b"/>
<rect x="0" y="86" width="8" height="5" fill="#222"/>
<rect x="122" y="94" width="8" height="8" fill="#bdb6ab"/><rect x="131" y="94" width="8" height="8" fill="#bdb6ab"/><rect x="140" y="94" width="8" height="8" fill="#bdb6ab"/><rect x="149" y="94" width="8" height="8" fill="#bdb6ab"/>
<rect x="164" y="89" width="10" height="13" rx="1" fill="#c2bbb0"/><rect x="176" y="89" width="10" height="13" rx="1" fill="#c2bbb0"/>

<path d="M68 106Q60 70 75 44Q86 26 108 27Q131 28 139 52Q147 76 152 106Z" fill="#1f1d2a"/>
<path d="M50 106Q54 99 70 97H150Q160 100 164 106Z" fill="#1c1e30"/>
<path d="M78 62Q78 40 102 39Q126 40 126 62V76Q124 98 102 106Q80 98 78 76Z" fill="url(#sk4)"/>
<path d="M76 70Q74 36 104 34Q113 33 117 38Q130 46 128 70Q122 50 109 41Q97 47 85 51Q78 57 76 70Z" fill="#1f1d2a"/>
<rect x="78.500" y="66.500" width="21.500" height="12" rx="3" fill="#e4c0ae" opacity="0.75" stroke="#17161c" stroke-width="1.500"/><rect x="104.500" y="66.500" width="21.500" height="12" rx="3" fill="#e4c0ae" opacity="0.75" stroke="#17161c" stroke-width="1.500"/><path d="M100 70H104.500" stroke="#17161c" stroke-width="1.400"/>
<path d="M83 71.500Q89 69.500 95 71.500M109 71.500Q115 69.500 121 71.500" stroke="#3a2a2a" stroke-width="1.400" fill="none"/>
<path d="M82 62Q89 59 96 61M108 61Q115 59 122 62" stroke="#3a2e2c" stroke-width="1.500" fill="none" opacity="0.8"/>
<ellipse cx="102" cy="83" rx="5" ry="3.500" fill="#c48e76" opacity="0.7"/>
<path d="M91 90.500Q102 98 113 90.500Q102 88.500 91 90.500Z" fill="#f4eeee"/><path d="M89 89.500Q102 101 115 89.500" stroke="#b4605e" stroke-width="1.500" fill="none"/></svg><div class="a" style="left:0;top:89px;width:50.5px;height:17px;background:rgba(20,20,22,0.55)"></div><svg style="left:5px;top:91px" width="11" height="13" viewBox="0 0 11 13"><g opacity="0.85"><rect x="3" y="0.5" width="4.6" height="8" rx="2.3" fill="#fff"/><path d="M0.8 6Q0.8 10.2 5.3 10.2Q9.8 10.2 9.8 6M5.3 10.2V12" fill="none" stroke="#fff" stroke-width="1.1"/></g><path d="M0 11.5L10.5 0.5" stroke="#f23b3b" stroke-width="1.5"/></svg><span class="t" style="left:19.7px;top:94.4px;font-size:9.5px;color:#fff">吴晓庆</span></div><div class="a" style="left:1068px;top:510px;width:190px;height:106px;overflow:hidden;outline:1px solid #17191b;background:#333"><svg style="left:0;top:0px;filter:blur(0.65px)" width="190" height="106" viewBox="0 0 190 106"><rect x="-8" y="-8" width="206" height="122" fill="#a89a88"/>

<rect width="190" height="106" fill="#b8b2a8"/>
<rect width="190" height="8" fill="#d0cbc1"/>
<rect y="7" width="190" height="1.5" fill="#8f8a82"/>
<rect y="34" width="190" height="20" fill="#b39270"/>
<rect y="54" width="190" height="25" fill="#a98a68"/>
<rect y="79" width="190" height="27" fill="#927660"/>
<rect y="50.5" width="190" height="3" fill="#dcbf92"/>
<rect y="76.5" width="190" height="3" fill="#d9ba8c"/>
<rect y="100" width="190" height="3" fill="#c5a67e"/>
<rect x="57" y="5" width="5.5" height="86" fill="#8f8f8d"/>
<rect x="114" y="5" width="5.5" height="86" fill="#8f8f8d"/>
<rect x="55" y="4.5" width="9" height="3" fill="#5d5c5a"/><rect x="112" y="4.5" width="9" height="3" fill="#5d5c5a"/>
<rect x="0" y="37" width="3" height="13" fill="#dcd9d3"/><rect x="4" y="37" width="7" height="13" rx="1" fill="#dcd9d3"/><rect x="12" y="37" width="7.5" height="13" rx="1" fill="#dcd9d3"/>
<rect x="20" y="41" width="15" height="9.5" fill="url(#st)"/><rect x="36" y="41" width="15.5" height="9.5" fill="url(#st)"/>
<rect x="62.5" y="39.5" width="14.5" height="11" fill="#e4e1db"/><circle cx="70" cy="31" r="4" fill="#26262a"/><rect x="69" y="34" width="2" height="5" fill="#555"/>
<rect x="131" y="38.5" width="18" height="12" fill="#dad6cf"/><rect x="153" y="35" width="18" height="15.5" fill="url(#bk)"/><path d="M151.5 50.5L154 35.5H156L153.5 50.5Z" fill="#e9e6e0"/><rect x="173" y="38.5" width="11" height="12" fill="url(#st)"/>
<rect x="62" y="60" width="10" height="16.5" fill="url(#bk2)"/>
<rect x="140" y="61" width="18" height="15.5" fill="url(#bk)"/><rect x="169" y="60" width="19" height="16.5" fill="url(#bk2)"/>
<path d="M6 76.5Q2 72 5 67Q6.5 65 6.3 61.5H9.3Q9 65 10.5 67Q13.5 72 10 76.5Z" fill="#efece6"/>
<path d="M12.5 71.5H21Q20.5 76.5 16.8 76.5Q13 76.5 12.5 71.5Z" fill="#e6e2da"/>
<rect x="29" y="65.5" width="28" height="24.5" fill="#8e9092"/><rect x="29" y="65.5" width="28" height="1" fill="#a6a8aa"/>
<rect x="0" y="89.5" width="70" height="2.5" fill="#2b2a29"/><rect x="12" y="92" width="1.6" height="14" fill="#2b2a29"/>
<rect x="116" y="89.5" width="52" height="2" fill="#2f2d2b"/><rect x="160" y="91" width="1.6" height="15" fill="#2f2d2b"/>
<rect x="0" y="86" width="8" height="5" fill="#222"/>
<rect x="122" y="94" width="8" height="8" fill="#bdb6ab"/><rect x="131" y="94" width="8" height="8" fill="#bdb6ab"/><rect x="140" y="94" width="8" height="8" fill="#bdb6ab"/><rect x="149" y="94" width="8" height="8" fill="#bdb6ab"/>
<rect x="164" y="89" width="10" height="13" rx="1" fill="#c2bbb0"/><rect x="176" y="89" width="10" height="13" rx="1" fill="#c2bbb0"/>

<path d="M41 106Q42 78 58 64L80 55H118L144 66Q172 84 176 106Z" fill="#e1e7e2"/>
<path d="M56 70Q50 84 48 106M150 74Q160 88 162 106" stroke="#c9d2cc" stroke-width="1.500" fill="none"/>
<path d="M80 18Q82 4 100 4Q119 5 121 24L128 60Q134 84 126 100H72Q70 84 77 60Z" fill="#3f3e45"/>
<path d="M88 56H112V102H90Z" fill="#e3e7e2"/>
<path d="M90 52H108L106 62Q99 66 92 62Z" fill="#cf9f8e"/>
<path d="M83 30Q83 12 99.500 11Q116 12 116 30V38Q114 54 99.500 58Q85 54 83 38Z" fill="url(#sk5)"/>
<path d="M81 34Q80 7 100 6Q118 7 118 32Q112 16 105 13L99 25L96 13Q86 17 81 34Z" fill="#3f3e45"/>
<path d="M77 60Q74 84 82 101L92 101Q85 80 88 55Z" fill="#3f3e45"/><path d="M112 55Q116 80 119 101H128Q131 80 125 58Z" fill="#3f3e45"/>
<path d="M96 100Q99 80 103 100" fill="#6a5a8a" opacity="0.35"/>
<circle cx="91" cy="28" r="6.200" fill="#e6c4b8" fill-opacity="0.35" stroke="#3a2c2a" stroke-width="1.100"/><circle cx="107" cy="28" r="6.200" fill="#e6c4b8" fill-opacity="0.35" stroke="#3a2c2a" stroke-width="1.100"/><path d="M97.200 27.500H100.800" stroke="#3a2c2a" stroke-width="1"/>
<path d="M93 43.500Q99 41.500 105 43.500Q99 46.500 93 43.500Z" fill="#b45c5c"/>
<path d="M70 101H150V106H70Z" fill="#dfe8ec"/></svg><div class="a" style="left:0;top:89px;width:42px;height:17px;background:rgba(20,20,22,0.55)"></div><svg style="left:5px;top:91px" width="11" height="13" viewBox="0 0 11 13"><g opacity="0.85"><rect x="3" y="0.5" width="4.6" height="8" rx="2.3" fill="#fff"/><path d="M0.8 6Q0.8 10.2 5.3 10.2Q9.8 10.2 9.8 6M5.3 10.2V12" fill="none" stroke="#fff" stroke-width="1.1"/></g><path d="M0 11.5L10.5 0.5" stroke="#f23b3b" stroke-width="1.5"/></svg><span class="t" style="left:19.7px;top:94.4px;font-size:9.5px;color:#fff">陈艺</span><div class="a" style="left:41px;top:89px;width:15.5px;height:17px;background:rgba(95,98,102,0.9)"></div><div class="a" style="left:43.5px;top:98px;width:2.6px;height:5.500px;background:#f23b3b;border-radius:1px"></div><div class="a" style="left:47.5px;top:96px;width:2.6px;height:7.500px;background:#c9cacc;border-radius:1px"></div><div class="a" style="left:51.5px;top:93.5px;width:2.6px;height:10px;background:#c9cacc;border-radius:1px"></div></div><div class="a" style="left:1067px;top:627px;width:192px;height:86px;background:#2c3034;outline:1px solid #1a1c1e"></div><div class="a" style="left:1133px;top:627px;width:60px;height:86px;overflow:hidden"><svg style="left:0;top:0" width="60" height="86" viewBox="0 0 60 86"><rect width="60" height="86" fill="#c9ab6c"/>
<rect width="60" height="19" fill="#7686b4"/><rect y="0" width="60" height="3" fill="#4f5c8c"/><rect x="14" y="7" width="29" height="1.2" fill="#c9d6ee"/><rect y="18" width="60" height="2" fill="#d8d2c0"/>
<rect x="10" y="24" width="9" height="6" fill="#e9e6ef" stroke="#6a5a4a" stroke-width="0.6"/><rect x="24" y="24" width="9" height="6" fill="#e9e6ef" stroke="#6a5a4a" stroke-width="0.6"/>
<rect x="2" y="33" width="52" height="21" fill="#20726a"/><rect x="1" y="33" width="2" height="21" fill="#d9c8c0"/><rect x="54" y="33" width="5" height="21" fill="#e6d6d0"/>
<rect x="5" y="38" width="5" height="12" fill="#e9c6c6"/>
<rect y="54" width="60" height="3" fill="#e3d9c4"/>
<rect y="57" width="60" height="14" fill="#b79a5c"/><path d="M0 60H60M0 64H60M0 68H60" stroke="#8a7444" stroke-width="1"/>
<path d="M0 86V78Q6 72 16 70H44Q54 72 60 78V86Z" fill="#232427"/>
<ellipse cx="29" cy="52" rx="12.500" ry="17" fill="url(#sk6)"/>
<path d="M16.500 50Q15 32 29 31.500Q42 32 41.500 50Q39 40 34 38Q26 37 20 40Q17 44 16.500 50Z" fill="#3b3632"/>
<path d="M22 62Q29 67 36 62Q29 61 22 62Z" fill="#ece0dc"/>
<path d="M24 70Q29 76 34 70V86H24Z" fill="#15161a"/></svg></div><div class="a" style="left:1135px;top:683px;width:62px;height:18px;background:rgba(40,42,46,0.45);border-radius:3px"></div><svg style="left:1161px;top:689px;" width="11" height="6" viewBox="0 0 11 6"><path d="M0.7 0.7L5.5 5L10.300 0.7" fill="none" stroke="#fff" stroke-width="1.3"/></svg><div class="a" style="left:1060px;top:50px;width:207px;height:1px;background:#f7f8fa;"></div><div class="a" style="left:1040px;top:57px;width:204px;height:31px;background:#2b2e31;border-radius:0 6px 6px 0"></div><div class="a" style="left:1062px;top:62px;width:1px;height:21px;background:#17191b;"></div><svg style="left:1041px;top:66px;" width="9" height="13" viewBox="0 0 9 13"><rect x="2" y="0" width="5" height="8.500" rx="2.500" fill="#6a6d72"/><rect x="2" y="2.500" width="5" height="6" rx="2.500" fill="#19c45a"/><path d="M0.500 6Q0.500 10.500 4.500 10.500Q8.500 10.500 8.500 6M4.500 10.500V12.500M2.500 12.700H6.500" fill="none" stroke="#8a8d92" stroke-width="0.9"/></svg><span class="t" style="left:1069px;top:68px;font-size:11px;color:#fff;letter-spacing:-0.45px">正在讲话: 邓秋菊; 廖春梅; 赵星...</span><svg style="left:1190px;top:62px;" width="46" height="22" viewBox="0 0 46 22"><path d="M12 1L22 11L12 21L2 11Z M34 3L42 11L34 19L26 11Z" fill="#fff" opacity="0.07"/></svg><svg style="left:538px;top:639px;" width="11" height="11" viewBox="0 0 11 11"><path d="M5.5 0.5L10 3V8L5.5 10.5L1 8V3Z M1 3L5.5 5.5L10 3M5.5 5.5V10.5" fill="none" stroke="#777" stroke-width="0.9"/></svg><span class="t" style="left:553px;top:640.8px;font-size:9.4px;color:#777;">智能美化</span><svg style="left:598px;top:643px;" width="5" height="3" viewBox="0 0 5 3"><path d="M0 3H5L2.5 0Z" fill="#888"/></svg><div class="a" style="left:610px;top:637px;width:1px;height:13px;background:#dcdde0;"></div><svg style="left:622px;top:640px;" width="14" height="9" viewBox="0 0 14 9"><path d="M0 0.5H4M10 0.5H14M0 4.5H14M0 8.5H14" stroke="#444"/><path d="M5 1.5L7 -0.5L9 1.5" stroke="#444" fill="none"/></svg><span class="t" style="left:637px;top:640.8px;font-size:9.4px;color:#333;">备注</span><svg style="left:659px;top:643px;" width="5" height="3" viewBox="0 0 5 3"><path d="M0 0H5L2.5 3Z" fill="#666"/></svg><svg style="left:668px;top:638px;" width="14" height="12" viewBox="0 0 14 12"><path d="M8 2.5H0.5V10.5H3V12.5L5.5 10.5H11.5V6" fill="none" stroke="#444"/><path d="M11 0V5M8.5 2.5H13.5" stroke="#444"/></svg><span class="t" style="left:686px;top:640.8px;font-size:9.4px;color:#333;">批注</span><div class="a" style="left:713px;top:637px;width:1px;height:13px;background:#dcdde0;"></div><div class="a" style="left:722px;top:635px;width:20px;height:19px;background:#dcdde0;"></div><svg style="left:726px;top:639px;" width="12" height="11" viewBox="0 0 12 11"><rect x="0.5" y="0.5" width="11" height="10" fill="none" stroke="#444"/><path d="M3.5 0.5V10.5M3.5 2.5H11.5" stroke="#444" fill="none"/></svg><svg style="left:746px;top:639px;" width="12" height="11" viewBox="0 0 12 11"><rect x="0.5" y="0.5" width="4" height="3.7" fill="none" stroke="#444"/><rect x="7" y="0.5" width="4" height="3.7" fill="none" stroke="#444"/><rect x="0.5" y="6.7" width="4" height="3.7" fill="none" stroke="#444"/><rect x="7" y="6.7" width="4" height="3.7" fill="none" stroke="#444"/></svg><svg style="left:766px;top:639px;" width="13" height="11" viewBox="0 0 13 11"><path d="M0.5 0.5H6.5V10.5H0.5Z M6.5 0.5H12.5V10.5H6.5" fill="none" stroke="#444"/></svg><div class="a" style="left:788px;top:637px;width:1px;height:13px;background:#dcdde0;"></div><div class="a" style="left:798px;top:635px;width:25px;height:19px;background:#5c6379;border-radius:1px"></div><svg style="left:807px;top:639.5px;" width="8" height="10" viewBox="0 0 8 10"><path d="M0 0L8 5L0 10Z" fill="#fff"/></svg><svg style="left:826px;top:643px;" width="5" height="3" viewBox="0 0 5 3"><path d="M0 0H5L2.5 3Z" fill="#666"/></svg><div class="a" style="left:838px;top:637px;width:1px;height:13px;background:#dcdde0;"></div><svg style="left:850px;top:638.5px;" width="12" height="12" viewBox="0 0 12 12"><path d="M0.5 3V0.5H3M9 0.5H11.5V3M11.5 9V11.5H9M3 11.5H0.5V9" fill="none" stroke="#444"/><rect x="3.5" y="3.5" width="5" height="5" fill="none" stroke="#444"/></svg><span class="t" style="left:868px;top:640.8px;font-size:9.4px;color:#333;">71%</span><svg style="left:890px;top:643px;" width="5" height="3" viewBox="0 0 5 3"><path d="M0 0H5L2.5 3Z" fill="#666"/></svg><div class="a" style="left:905px;top:644px;width:8px;height:1.6px;background:#333;"></div><div class="a" style="left:921px;top:644px;width:37px;height:1px;background:#555;"></div><div class="a" style="left:958px;top:644px;width:70px;height:1px;background:#cfd0d3;"></div><svg style="left:953px;top:640px;" width="10" height="10" viewBox="0 0 10 10"><circle cx="5" cy="5" r="4" fill="#fff" stroke="#555"/></svg><svg style="left:1037px;top:640.5px;" width="9" height="9" viewBox="0 0 9 9"><path d="M4.5 0V9M0 4.5H9" stroke="#333" stroke-width="1.5"/></svg><div class="a" style="left:0px;top:657px;width:1058px;height:30.5px;background:linear-gradient(180deg,#b9c5cd 0px,#d3dee6 3px,#d9e4eb 7px,#d9e4eb 100%);"></div><svg style="left:8px;top:666px;" width="13" height="13" viewBox="0 0 13 13"><path d="M0 1.8L5.5 1V6H0Z M6.5 0.9L13 0V6H6.5Z M0 7H5.5V12L0 11.2Z M6.5 7H13V13L6.5 12.1Z" fill="#111"/></svg><svg style="left:36px;top:666px;" width="13" height="13" viewBox="0 0 13 13"><circle cx="7.8" cy="5" r="4.2" fill="none" stroke="#222" stroke-width="1.3"/><path d="M4.8 8.2L0.8 12.5" stroke="#222" stroke-width="1.4"/></svg><svg style="left:66px;top:663px;" width="13.5" height="12.6" viewBox="0 0 15 14"><ellipse cx="6" cy="5" rx="5.5" ry="3.5" fill="none" stroke="#d8486a" stroke-width="1.2" transform="rotate(-25 6 5)"/><ellipse cx="9" cy="6" rx="4.5" ry="3" fill="none" stroke="#e06c86" stroke-width="1"/><path d="M7 8L9.5 13L11 10Z" fill="#3c7fd0"/></svg><svg style="left:94px;top:663px;" width="12.6" height="12.6" viewBox="0 0 14 14"><rect x="1" y="0" width="5" height="7" fill="#e8c44a"/><path d="M5 4L13 12M12 4L5 12" stroke="#7b8794" stroke-width="1.5"/><rect x="8" y="1" width="5" height="4" fill="#c9d3dc"/></svg><svg style="left:122.5px;top:663px;" width="14.4" height="12.6" viewBox="0 0 16 14"><path d="M0 1H6L7.5 2.5H15V13H0Z" fill="#f4c542"/><rect x="0" y="4" width="15" height="9" fill="#fbd75e"/><rect x="4" y="8" width="7" height="5" fill="#3b8fdc"/></svg><svg style="left:151.5px;top:662.5px;" width="13" height="13" viewBox="0 0 15 15"><rect width="14" height="14" fill="#7a2e1e"/><rect x="0" y="0" width="4.5" height="4.5" fill="#c9362c"/><rect x="5" y="0" width="4" height="4.5" fill="#7a5bd0"/><rect x="9.5" y="0" width="4.5" height="4.5" fill="#3d7fd8"/><rect x="0" y="9" width="4.5" height="5" fill="#3fa34d"/><rect x="5" y="5" width="4" height="9" fill="#d9a520"/><rect x="9.5" y="9" width="4.5" height="5" fill="#c9362c"/></svg><svg style="left:180.5px;top:664px;" width="13.5" height="10.8" viewBox="0 0 15 12"><path d="M0 0H3L4.8 7L7.5 0H7.6L10.2 7L12 0H15L11.5 12H9L7.5 7.5L6 12H3.5Z" fill="#e8312a"/></svg><svg style="left:208.5px;top:663px;" width="12.6" height="12.6" viewBox="0 0 14 14"><rect width="14" height="13" rx="2" fill="#2d7be8"/><path d="M2.5 8.5Q4 4.5 5.5 7Q7 3.5 8.5 7Q10 4.5 11.5 8.5Z" fill="#fff"/></svg><svg style="left:237.5px;top:662.5px;" width="14" height="13.1" viewBox="0 0 16 15"><circle cx="7.5" cy="8" r="5.3" fill="none" stroke="#5fb548" stroke-width="2.6"/><rect x="7" y="8" width="7" height="2.4" fill="#dbe5ec"/><path d="M3 8H12" stroke="#5fb548" stroke-width="2"/><path d="M1 6Q6 -2 15 2" fill="none" stroke="#8fcf5a" stroke-width="1.3"/></svg><div class="a" style="left:118px;top:678.8px;width:22px;height:1.7px;background:#3a92d4;"></div><div class="a" style="left:147px;top:678.8px;width:22px;height:1.7px;background:#3a92d4;"></div><div class="a" style="left:176px;top:678.8px;width:22px;height:1.7px;background:#3a92d4;"></div><div class="a" style="left:204px;top:678.8px;width:22px;height:1.7px;background:#3a92d4;"></div><div class="a" style="left:233px;top:678.8px;width:22px;height:1.7px;background:#3a92d4;"></div><span class="t" style="left:759px;top:662px;font-size:9px;color:#222;">63℃</span><span class="t" style="left:750px;top:674.8px;font-size:9.2px;color:#222;">CPU温度</span><svg style="left:796px;top:668px;" width="9" height="6" viewBox="0 0 9 6"><path d="M0.5 5.5L4.5 1L8.5 5.5" fill="none" stroke="#222" stroke-width="1.2"/></svg><svg style="left:814px;top:665px;" width="8" height="13" viewBox="0 0 8 13"><rect x="1.5" y="0" width="5" height="8" rx="2.5" fill="#222"/><path d="M0.3 6Q0.3 10 4 10Q7.7 10 7.7 6M4 10V12.5M2 12.5H6" fill="none" stroke="#222" stroke-width="0.9"/></svg><svg style="left:830px;top:668px;" width="12" height="7" viewBox="0 0 12 7"><rect x="2" y="0.5" width="9.5" height="6" rx="1" fill="#222"/><rect x="0" y="2.2" width="2" height="2.6" fill="#222"/><rect x="4" y="2" width="5.5" height="3" fill="#dbe5ec"/></svg><svg style="left:848px;top:666px;" width="11" height="11" viewBox="0 0 11 11"><path d="M0.5 10.5Q0.5 0.5 10.5 0.5M3.5 10.5Q3.5 3.5 10.5 3.5M6.5 10.5Q6.5 6.5 10.5 6.5" fill="none" stroke="#444" stroke-width="1"/></svg><svg style="left:865px;top:666px;" width="13" height="11" viewBox="0 0 13 11"><path d="M0 3.5H2.5L5.5 0.8V10.2L2.5 7.5H0Z" fill="none" stroke="#222" stroke-width="0.9"/><path d="M7.5 3.5Q8.8 5.5 7.5 7.5M9.5 2Q11.5 5.5 9.5 9" fill="none" stroke="#222" stroke-width="0.9"/></svg><svg style="left:888px;top:666px;" width="11" height="11" viewBox="0 0 11 11"><circle cx="5.5" cy="5.5" r="5" fill="none" stroke="#666" stroke-width="0.9"/><path d="M3.5 3.5L7.5 7.5M7.5 3.5L3.5 7.5" stroke="#666" stroke-width="0.9"/></svg><span class="t" style="left:907px;top:667.8px;font-size:9.4px;color:#222;">简体</span><span class="t" style="left:947px;top:662.3px;font-size:9.6px;color:#222;">16:37</span><span class="t" style="left:932.5px;top:675.6px;font-size:9.9px;color:#222;">2022-11-16</span><svg style="left:997px;top:666px;" width="12" height="12" viewBox="0 0 12 12"><rect x="0.6" y="0.6" width="10.8" height="10.8" rx="1" fill="none" stroke="#222" stroke-width="1.1"/><path d="M4.3 3.5L8 6L4.3 8.5Z" fill="#222"/></svg><svg style="left:1027px;top:665px;" width="13" height="13" viewBox="0 0 13 13"><path d="M0 0H13V10H5L2.5 12.5V10H0Z" fill="#222"/><path d="M2.5 3H10.5M2.5 5.5H10.5M2.5 8H7" stroke="#dbe5ec" stroke-width="0.9"/><circle cx="11" cy="10.5" r="2.2" fill="#222" stroke="#dbe5ec" stroke-width="0.7"/></svg><div class="a" style="left:0px;top:712.5px;width:1267px;height:16px;background:#fff;"></div><div class="a" style="left:25px;top:718px;width:8px;height:10px;background:#3a3d42;border-radius:4px 4px 0 0"></div><div class="a" style="left:25px;top:723px;width:8px;height:5px;background:#19c45a;"></div><div class="a" style="left:83px;top:720.5px;width:17px;height:8px;background:#3a3d42;border-radius:2px 2px 0 0"></div><svg style="left:99px;top:721px;" width="6" height="7" viewBox="0 0 6 7"><path d="M0 4L6 0V7H0Z" fill="#3a3d42"/></svg><div class="a" style="left:427px;top:718px;width:22px;height:10px;background:#3a3d42;border:1.6px solid #19c45a;border-bottom:none;border-radius:2px 2px 0 0"></div><svg style="left:433px;top:722px;" width="10" height="6" viewBox="0 0 10 6"><path d="M2 6Q2 1.5 7 1.5" fill="none" stroke="#fff" stroke-width="1.8"/><path d="M6 -1L9.5 1.8L6 4.5Z" fill="#fff"/></svg><svg style="left:496px;top:719px;" width="9" height="9" viewBox="0 0 9 9"><circle cx="4.5" cy="3.2" r="3" fill="#3a3d42"/><path d="M1.5 9Q4.5 6 7.5 9Z" fill="#3a3d42"/></svg><svg style="left:548px;top:719px;" width="11" height="9" viewBox="0 0 11 9"><circle cx="4.5" cy="3.6" r="3" fill="#3a3d42"/><path d="M1.5 9Q4.5 6.5 7.5 9Z" fill="#3a3d42"/><path d="M8 0.8Q10 3.2 8 5.8" fill="none" stroke="#3a3d42" stroke-width="0.9"/></svg><div class="a" style="left:595px;top:721px;width:18px;height:7px;background:#3a3d42;border-radius:2px 2px 0 0"></div><div class="a" style="left:599px;top:725px;width:2px;height:2px;background:#fff;"></div><div class="a" style="left:603px;top:725px;width:2px;height:2px;background:#fff;"></div><div class="a" style="left:607px;top:725px;width:2px;height:2px;background:#fff;"></div><svg style="left:653px;top:718px;" width="20" height="10" viewBox="0 0 20 10"><circle cx="10" cy="10" r="8.8" fill="none" stroke="#3a3d42" stroke-width="1.5"/><circle cx="10" cy="10" r="6" fill="#3a3d42"/></svg><svg style="left:716px;top:718px;" width="13" height="10" viewBox="0 0 13 10"><path d="M3.5 3V10M6 1V10M8.5 1V10M11 3V10" stroke="#3a3d42" stroke-width="1.6"/><path d="M0 8.5H5" stroke="#3a3d42" stroke-width="1.2"/></svg><div class="a" style="left:766px;top:720px;width:8px;height:7px;background:#3a3d42;border-radius:1px"></div><svg style="left:776px;top:718px;" width="9" height="9" viewBox="0 0 9 9"><path d="M4.5 0.8L8.2 4.5L4.5 8.2L0.8 4.5Z" fill="none" stroke="#3a3d42" stroke-width="1.3"/></svg><svg style="left:819px;top:719px;" width="18" height="9" viewBox="0 0 18 9"><path d="M9 0L11 0.3L11.8 2.3L13.8 1.6L15.5 3.2L14.8 5.2L16.8 6.2L17 9H1L1.2 6.2L3.2 5.2L2.5 3.2L4.2 1.6L6.2 2.3L7 0.3Z" fill="#3a3d42"/><circle cx="9" cy="9.5" r="3" fill="#fff"/></svg><div class="a" style="left:1189px;top:718px;width:68px;height:12px;background:#fff;border:1.3px solid #f7a5a5;border-radius:3px"></div></div>
</body>
</html>
